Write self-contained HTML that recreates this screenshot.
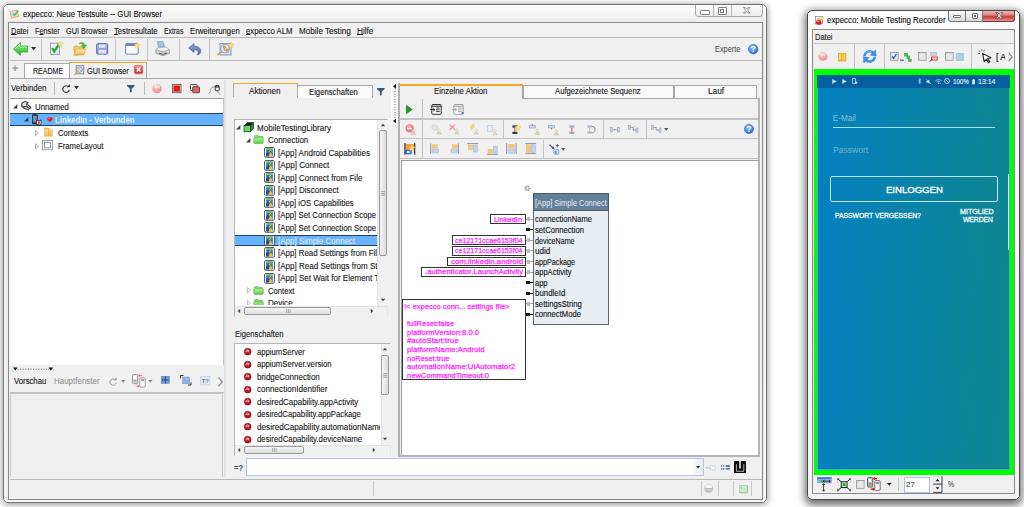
<!DOCTYPE html>
<html><head><meta charset="utf-8"><title>expecco</title>
<style>
html,body{margin:0;padding:0;background:#fff;}
body{width:1024px;height:507px;position:relative;overflow:hidden;font-family:"Liberation Sans",sans-serif;}
.b{position:absolute;box-sizing:content-box;}
.t{position:absolute;white-space:nowrap;transform-origin:0 50%;font-family:"Liberation Sans",sans-serif;}
.t u{text-decoration:underline;text-underline-offset:.3px;text-decoration-thickness:.8px;}
svg{position:absolute;overflow:visible;}
</style></head><body>
<div class="b" style="left:3.20px;top:3.60px;width:761.80px;height:497.40px;border-radius:5px;background:linear-gradient(180deg,#fdfdfd 0,#f4f4f4 10px,#e9e9e9 19px,#efefef 100%);border:1.3px solid #707070;box-shadow:0 1px 6px 1px rgba(0,0,0,.38);"></div>
<div class="b" style="left:4.20px;top:4.60px;width:759.80px;height:495.40px;border-radius:4px;border:1px solid rgba(255,255,255,.9);"></div>
<div class="b" style="left:7.90px;top:22.30px;width:753.00px;height:475.80px;background:#f0f0f0;border:1px solid #8a8a8a;"></div>
<div class="t" style="left:22.60px;top:9.07px;font-size:8.5px;line-height:11.05px;color:#111;transform:scaleX(0.9176);-webkit-text-stroke:.12px #111;">expecco: Neue Testsuite -- GUI Browser</div>
<div class="b" style="left:694.50px;top:4.80px;width:66.80px;height:11.40px;border:1px solid #a9a9a9;border-top:none;border-radius:0 0 3.5px 3.5px;background:linear-gradient(180deg,#fcfcfc,#ececec);box-sizing:content-box;"></div>
<div class="b" style="left:713.20px;top:4.80px;width:1.00px;height:11.40px;background:#b9b9b9;"></div>
<div class="b" style="left:731.00px;top:4.80px;width:1.00px;height:11.40px;background:#b9b9b9;"></div>
<div class="b" style="left:700.00px;top:10.20px;width:7.60px;height:2.60px;border:1px solid #7c7c7c;border-radius:1.2px;background:#fff;"></div>
<div class="b" style="left:718.20px;top:7.40px;width:6.40px;height:5.20px;border:1px solid #7c7c7c;border-radius:1px;background:#fff;"></div>
<div class="b" style="left:720.30px;top:9.40px;width:2.20px;height:1.30px;border:1px solid #7c7c7c;"></div>
<svg style="left:743.2px;top:7.2px" width="7.4" height="6.6" viewBox="0 0 7.4 6.6"><path d="M.5 .5 H2.2 L3.7 2.2 L5.2 .5 H6.9 L4.6 3.3 L6.9 6.1 H5.2 L3.7 4.4 L2.2 6.1 H.5 L2.8 3.3Z" fill="#fff" stroke="#777" stroke-width=".8"/></svg>
<div class="b" style="left:9.50px;top:23.50px;width:752.00px;height:13.50px;background:#f1f1f1;border-bottom:1px solid #b9b9b9;"></div>
<div class="t" style="left:10.80px;top:26.47px;font-size:8.5px;line-height:11.05px;color:#1a1a1a;transform:scaleX(0.8769);-webkit-text-stroke:.12px #1a1a1a;"><u>D</u>atei</div>
<div class="t" style="left:34.50px;top:26.47px;font-size:8.5px;line-height:11.05px;color:#1a1a1a;transform:scaleX(0.8572);-webkit-text-stroke:.12px #1a1a1a;">F<u>e</u>nster</div>
<div class="t" style="left:65.70px;top:26.47px;font-size:8.5px;line-height:11.05px;color:#1a1a1a;transform:scaleX(0.8593);-webkit-text-stroke:.12px #1a1a1a;">GUI Browser</div>
<div class="t" style="left:113.80px;top:26.47px;font-size:8.5px;line-height:11.05px;color:#1a1a1a;transform:scaleX(0.9048);-webkit-text-stroke:.12px #1a1a1a;"><u>T</u>estresultate</div>
<div class="t" style="left:163.70px;top:26.47px;font-size:8.5px;line-height:11.05px;color:#1a1a1a;transform:scaleX(0.8012);-webkit-text-stroke:.12px #1a1a1a;">Extras</div>
<div class="t" style="left:189.70px;top:26.47px;font-size:8.5px;line-height:11.05px;color:#1a1a1a;transform:scaleX(0.9068);-webkit-text-stroke:.12px #1a1a1a;">Erweiterungen</div>
<div class="t" style="left:245.80px;top:26.47px;font-size:8.5px;line-height:11.05px;color:#1a1a1a;transform:scaleX(0.9113);-webkit-text-stroke:.12px #1a1a1a;"><u>e</u>xpecco ALM</div>
<div class="t" style="left:298.60px;top:26.47px;font-size:8.5px;line-height:11.05px;color:#1a1a1a;transform:scaleX(0.9543);-webkit-text-stroke:.12px #1a1a1a;">Mobile Testing</div>
<div class="t" style="left:356.80px;top:26.47px;font-size:8.5px;line-height:11.05px;color:#1a1a1a;transform:scaleX(0.9645);-webkit-text-stroke:.12px #1a1a1a;"><u>H</u>ilfe</div>
<div class="b" style="left:9.50px;top:38.00px;width:752.00px;height:22.00px;background:#f0f0f0;border-bottom:1px solid #bdbdbd;"></div>
<div class="b" style="left:40.90px;top:38.50px;width:1.00px;height:21.00px;background:#c4c4c4;"></div>
<div class="b" style="left:115.30px;top:38.50px;width:1.00px;height:21.00px;background:#c4c4c4;"></div>
<div class="b" style="left:146.50px;top:38.50px;width:1.00px;height:21.00px;background:#c4c4c4;"></div>
<div class="b" style="left:179.00px;top:38.50px;width:1.00px;height:21.00px;background:#c4c4c4;"></div>
<div class="b" style="left:209.00px;top:38.50px;width:1.00px;height:21.00px;background:#c4c4c4;"></div>
<div class="t" style="left:714.50px;top:44.48px;font-size:8.5px;line-height:11.05px;color:#444;transform:scaleX(0.8637);">Experte</div>
<div class="b" style="left:9.50px;top:60.50px;width:752.00px;height:17.00px;background:#f0f0f0;border-bottom:1px solid #a8a8a8;"></div>
<div class="b" style="left:24.40px;top:63.30px;width:44.40px;height:14.20px;background:#fbfbfb;border:1px solid #a8a8a8;border-bottom:none;"></div>
<div class="t" style="left:32.50px;top:65.97px;font-size:8.5px;line-height:11.05px;color:#1a1a1a;transform:scaleX(0.8304);-webkit-text-stroke:.12px #1a1a1a;">README</div>
<div class="b" style="left:69.40px;top:61.60px;width:75.40px;height:15.80px;background:#f0f0f0;border:1px solid #a8a8a8;border-bottom:none;border-top:1.8px solid #f5a623;"></div>
<div class="t" style="left:87.40px;top:65.77px;font-size:8.5px;line-height:11.05px;color:#1a1a1a;transform:scaleX(0.8593);-webkit-text-stroke:.12px #1a1a1a;">GUI Browser</div>
<div class="t" style="left:11.20px;top:83.47px;font-size:8.5px;line-height:11.05px;color:#1a1a1a;transform:scaleX(0.9274);-webkit-text-stroke:.12px #1a1a1a;">Verbinden</div>
<div class="b" style="left:54.20px;top:82.00px;width:1.00px;height:13.00px;background:#bbb;"></div>
<div class="b" style="left:144.20px;top:82.00px;width:1.00px;height:13.00px;background:#bbb;"></div>
<div class="b" style="left:9.50px;top:97.60px;width:213.20px;height:266.90px;background:#fff;border-top:1px solid #9a9a9a;border-right:1px solid #c8c8c8;"></div>
<div class="b" style="left:10.00px;top:113.00px;width:213.20px;height:12.60px;background:#66b2ff;border-top:1px solid #245;border-bottom:1px solid #245;box-sizing:border-box;"></div>
<div class="t" style="left:35.10px;top:101.88px;font-size:8.5px;line-height:11.05px;color:#1a1a1a;transform:scaleX(0.9199);-webkit-text-stroke:.12px #1a1a1a;">Unnamed</div>
<div class="t" style="left:54.60px;top:114.67px;font-size:8.5px;line-height:11.05px;color:#eaf4ff;transform:scaleX(0.9200);font-weight:bold;">LinkedIn - Verbunden</div>
<div class="t" style="left:57.60px;top:127.98px;font-size:8.5px;line-height:11.05px;color:#1a1a1a;transform:scaleX(0.9004);-webkit-text-stroke:.12px #1a1a1a;">Contexts</div>
<div class="t" style="left:57.60px;top:140.97px;font-size:8.5px;line-height:11.05px;color:#1a1a1a;transform:scaleX(0.9067);-webkit-text-stroke:.12px #1a1a1a;">FrameLayout</div>
<div class="b" style="left:9.50px;top:371.50px;width:215.00px;height:20.00px;background:#f0f0f0;border-bottom:1px solid #c0c0c0;"></div>
<div class="t" style="left:13.70px;top:376.48px;font-size:8.5px;line-height:11.05px;color:#1a1a1a;transform:scaleX(0.9114);-webkit-text-stroke:.12px #1a1a1a;">Vorschau</div>
<div class="t" style="left:54.00px;top:376.48px;font-size:8.5px;line-height:11.05px;color:#888;transform:scaleX(0.9370);">Hauptfenster</div>
<div class="b" style="left:10.00px;top:392.50px;width:213.00px;height:84.00px;background:#efefef;border:1px solid #c6c6c6;border-bottom:none;box-sizing:border-box;"></div>
<div class="b" style="left:224.00px;top:79.50px;width:1.50px;height:397.00px;background:#e2e2e2;"></div>
<div class="b" style="left:225.50px;top:79.50px;width:165.00px;height:398.00px;background:#f0f0f0;"></div>
<div class="b" style="left:296.60px;top:85.40px;width:74.60px;height:11.60px;background:#fafafa;border:1px solid #a8a8a8;border-bottom:none;"></div>
<div class="b" style="left:232.80px;top:83.20px;width:63.40px;height:13.00px;background:#f0f0f0;border:1px solid #a8a8a8;border-bottom:none;border-top:1.8px solid #f5a623;"></div>
<div class="t" style="left:248.90px;top:86.17px;font-size:8.5px;line-height:11.05px;color:#1a1a1a;transform:scaleX(0.9553);-webkit-text-stroke:.12px #1a1a1a;">Aktionen</div>
<div class="t" style="left:309.00px;top:87.08px;font-size:8.5px;line-height:11.05px;color:#1a1a1a;transform:scaleX(0.9059);-webkit-text-stroke:.12px #1a1a1a;">Eigenschaften</div>
<div class="b" style="left:233.50px;top:119.00px;width:154.50px;height:197.50px;background:#fff;border:1px solid #b5b5b5;border-right-color:#e6e6e6;border-bottom-color:#e6e6e6;box-sizing:border-box;overflow:hidden;"></div>
<div class="b" style="left:234.50px;top:234.50px;width:142.50px;height:11.50px;background:#66b2ff;border-top:1px solid #245;border-bottom:1px solid #245;box-sizing:border-box;"></div>
<div class="b" style="left:234.5px;top:120px;width:142.5px;height:185px;overflow:hidden;"><div class="t" style="left:22.30px;top:2.58px;font-size:8.5px;line-height:11.05px;color:#1a1a1a;transform:scaleX(0.9494);-webkit-text-stroke:.12px #1a1a1a;">MobileTestingLibrary</div><div class="t" style="left:33.20px;top:15.13px;font-size:8.5px;line-height:11.05px;color:#1a1a1a;transform:scaleX(0.9372);-webkit-text-stroke:.12px #1a1a1a;">Connection</div><div class="t" style="left:43.40px;top:27.68px;font-size:8.5px;line-height:11.05px;color:#1a1a1a;transform:scaleX(0.9462);-webkit-text-stroke:.12px #1a1a1a;">[App] Android Capabilities</div><div class="t" style="left:43.40px;top:40.23px;font-size:8.5px;line-height:11.05px;color:#1a1a1a;transform:scaleX(0.9524);-webkit-text-stroke:.12px #1a1a1a;">[App] Connect</div><div class="t" style="left:43.40px;top:52.78px;font-size:8.5px;line-height:11.05px;color:#1a1a1a;transform:scaleX(0.9453);-webkit-text-stroke:.12px #1a1a1a;">[App] Connect from File</div><div class="t" style="left:43.40px;top:65.33px;font-size:8.5px;line-height:11.05px;color:#1a1a1a;transform:scaleX(0.9463);-webkit-text-stroke:.12px #1a1a1a;">[App] Disconnect</div><div class="t" style="left:43.40px;top:77.88px;font-size:8.5px;line-height:11.05px;color:#1a1a1a;transform:scaleX(0.9144);-webkit-text-stroke:.12px #1a1a1a;">[App] iOS Capabilities</div><div class="t" style="left:43.40px;top:90.42px;font-size:8.5px;line-height:11.05px;color:#1a1a1a;transform:scaleX(0.9196);-webkit-text-stroke:.12px #1a1a1a;">[App] Set Connection Scope</div><div class="t" style="left:43.40px;top:102.98px;font-size:8.5px;line-height:11.05px;color:#1a1a1a;transform:scaleX(0.9196);-webkit-text-stroke:.12px #1a1a1a;">[App] Set Connection Scope</div><div class="t" style="left:43.40px;top:115.53px;font-size:8.5px;line-height:11.05px;color:#e6f2ff;transform:scaleX(0.9403);">[App] Simple Connect</div><div class="t" style="left:43.40px;top:128.07px;font-size:8.5px;line-height:11.05px;color:#1a1a1a;transform:scaleX(0.9323);-webkit-text-stroke:.12px #1a1a1a;">[App] Read Settings from File</div><div class="t" style="left:43.40px;top:140.63px;font-size:8.5px;line-height:11.05px;color:#1a1a1a;transform:scaleX(0.9454);-webkit-text-stroke:.12px #1a1a1a;">[App] Read Settings from String</div><div class="t" style="left:43.40px;top:153.17px;font-size:8.5px;line-height:11.05px;color:#1a1a1a;transform:scaleX(0.9447);-webkit-text-stroke:.12px #1a1a1a;">[App] Set Wait for Element Timeout</div><div class="t" style="left:33.20px;top:165.72px;font-size:8.5px;line-height:11.05px;color:#1a1a1a;transform:scaleX(0.9013);-webkit-text-stroke:.12px #1a1a1a;">Context</div><div class="t" style="left:33.20px;top:178.28px;font-size:8.5px;line-height:11.05px;color:#1a1a1a;transform:scaleX(0.9469);-webkit-text-stroke:.12px #1a1a1a;">Device</div><svg style="left:18.900000000000006px;top:178.50px" width="10.8" height="8.8" viewBox="0 0 10.8 8.8"><path d="M1.4 1.4 Q1.4 .5 2.4 .5 H5 L6 1.5 H9 Q10 1.5 10 2.4 V7.4 Q10 8.3 9 8.3 H2.4 Q1.4 8.3 1.4 7.4Z" fill="#7fd86a" stroke="#4cb642" stroke-width=".6"/><path d="M.7 3.6 Q.7 2.8 1.6 2.8 H9.4 Q10.2 2.8 10.2 3.6 V7.4 Q10.2 8.3 9.3 8.3 H1.6 Q.7 8.3 .7 7.4Z" fill="#8fe07a" stroke="#55c048" stroke-width=".5"/></svg><svg style="left:12.099999999999994px;top:179.90px" width="4" height="6.4" viewBox="0 0 4 6.4"><path d="M.5 .6 L3.5 3.2 L.5 5.8Z" fill="#fff" stroke="#aaa" stroke-width=".8"/></svg></div>
<div class="b" style="left:377.00px;top:120.00px;width:10.50px;height:185.50px;background:#f0f0f0;border-left:1px solid #e3e3e3;"></div>
<div class="b" style="left:378.90px;top:130.30px;width:8.60px;height:125.50px;background:linear-gradient(90deg,#f5f5f5,#dcdcdc);border:1px solid #9a9a9a;border-radius:2px;box-sizing:border-box;"></div>
<div class="b" style="left:234.50px;top:305.50px;width:152.50px;height:10.00px;background:#f0f0f0;border-top:1px solid #e3e3e3;"></div>
<div class="b" style="left:244.40px;top:306.50px;width:86.80px;height:8.50px;background:linear-gradient(180deg,#f5f5f5,#dcdcdc);border:1px solid #9a9a9a;border-radius:2px;box-sizing:border-box;"></div>
<div class="t" style="left:234.50px;top:328.98px;font-size:8.5px;line-height:11.05px;color:#1a1a1a;transform:scaleX(0.9003);-webkit-text-stroke:.12px #1a1a1a;">Eigenschaften</div>
<div class="b" style="left:233.50px;top:343.00px;width:157.00px;height:113.00px;background:#fff;border:1px solid #b5b5b5;border-right-color:#e6e6e6;border-bottom-color:#e6e6e6;box-sizing:border-box;"></div>
<div class="b" style="left:234.5px;top:344px;width:145.5px;height:100px;overflow:hidden;"><div class="t" style="left:22.70px;top:2.87px;font-size:8.5px;line-height:11.05px;color:#1a1a1a;transform:scaleX(0.9034);-webkit-text-stroke:.12px #1a1a1a;">appiumServer</div><svg style="left:9.80px;top:4.00px" width="7.4" height="7.4" viewBox="0 0 7.4 7.4"><circle cx="3.7" cy="3.7" r="3.4" fill="#c2131f" stroke="#7c0a14" stroke-width=".6"/><path d="M2 3.9 C1.8 2.2 3.4 1.5 4.4 2.2 C5.4 2.9 4.6 4.2 3.9 3.9 C3.3 3.6 3.8 2.7 4.3 3" fill="none" stroke="#fff" stroke-width=".75" stroke-linecap="round"/></svg><div class="t" style="left:22.70px;top:15.37px;font-size:8.5px;line-height:11.05px;color:#1a1a1a;transform:scaleX(0.9075);-webkit-text-stroke:.12px #1a1a1a;">appiumServer.version</div><svg style="left:9.80px;top:16.50px" width="7.4" height="7.4" viewBox="0 0 7.4 7.4"><circle cx="3.7" cy="3.7" r="3.4" fill="#c2131f" stroke="#7c0a14" stroke-width=".6"/><path d="M2 3.9 C1.8 2.2 3.4 1.5 4.4 2.2 C5.4 2.9 4.6 4.2 3.9 3.9 C3.3 3.6 3.8 2.7 4.3 3" fill="none" stroke="#fff" stroke-width=".75" stroke-linecap="round"/></svg><div class="t" style="left:22.70px;top:27.87px;font-size:8.5px;line-height:11.05px;color:#1a1a1a;transform:scaleX(0.9426);-webkit-text-stroke:.12px #1a1a1a;">bridgeConnection</div><svg style="left:9.80px;top:29.00px" width="7.4" height="7.4" viewBox="0 0 7.4 7.4"><circle cx="3.7" cy="3.7" r="3.4" fill="#c2131f" stroke="#7c0a14" stroke-width=".6"/><path d="M2 3.9 C1.8 2.2 3.4 1.5 4.4 2.2 C5.4 2.9 4.6 4.2 3.9 3.9 C3.3 3.6 3.8 2.7 4.3 3" fill="none" stroke="#fff" stroke-width=".75" stroke-linecap="round"/></svg><div class="t" style="left:22.70px;top:40.37px;font-size:8.5px;line-height:11.05px;color:#1a1a1a;transform:scaleX(0.9551);-webkit-text-stroke:.12px #1a1a1a;">connectionIdentifier</div><svg style="left:9.80px;top:41.50px" width="7.4" height="7.4" viewBox="0 0 7.4 7.4"><circle cx="3.7" cy="3.7" r="3.4" fill="#c2131f" stroke="#7c0a14" stroke-width=".6"/><path d="M2 3.9 C1.8 2.2 3.4 1.5 4.4 2.2 C5.4 2.9 4.6 4.2 3.9 3.9 C3.3 3.6 3.8 2.7 4.3 3" fill="none" stroke="#fff" stroke-width=".75" stroke-linecap="round"/></svg><div class="t" style="left:22.70px;top:52.87px;font-size:8.5px;line-height:11.05px;color:#1a1a1a;transform:scaleX(0.9368);-webkit-text-stroke:.12px #1a1a1a;">desiredCapability.appActivity</div><svg style="left:9.80px;top:54.00px" width="7.4" height="7.4" viewBox="0 0 7.4 7.4"><circle cx="3.7" cy="3.7" r="3.4" fill="#c2131f" stroke="#7c0a14" stroke-width=".6"/><path d="M2 3.9 C1.8 2.2 3.4 1.5 4.4 2.2 C5.4 2.9 4.6 4.2 3.9 3.9 C3.3 3.6 3.8 2.7 4.3 3" fill="none" stroke="#fff" stroke-width=".75" stroke-linecap="round"/></svg><div class="t" style="left:22.70px;top:65.37px;font-size:8.5px;line-height:11.05px;color:#1a1a1a;transform:scaleX(0.9099);-webkit-text-stroke:.12px #1a1a1a;">desiredCapability.appPackage</div><svg style="left:9.80px;top:66.50px" width="7.4" height="7.4" viewBox="0 0 7.4 7.4"><circle cx="3.7" cy="3.7" r="3.4" fill="#c2131f" stroke="#7c0a14" stroke-width=".6"/><path d="M2 3.9 C1.8 2.2 3.4 1.5 4.4 2.2 C5.4 2.9 4.6 4.2 3.9 3.9 C3.3 3.6 3.8 2.7 4.3 3" fill="none" stroke="#fff" stroke-width=".75" stroke-linecap="round"/></svg><div class="t" style="left:22.70px;top:77.87px;font-size:8.5px;line-height:11.05px;color:#1a1a1a;transform:scaleX(0.9593);-webkit-text-stroke:.12px #1a1a1a;">desiredCapability.automationName</div><svg style="left:9.80px;top:79.00px" width="7.4" height="7.4" viewBox="0 0 7.4 7.4"><circle cx="3.7" cy="3.7" r="3.4" fill="#c2131f" stroke="#7c0a14" stroke-width=".6"/><path d="M2 3.9 C1.8 2.2 3.4 1.5 4.4 2.2 C5.4 2.9 4.6 4.2 3.9 3.9 C3.3 3.6 3.8 2.7 4.3 3" fill="none" stroke="#fff" stroke-width=".75" stroke-linecap="round"/></svg><div class="t" style="left:22.70px;top:90.37px;font-size:8.5px;line-height:11.05px;color:#1a1a1a;transform:scaleX(0.9205);-webkit-text-stroke:.12px #1a1a1a;">desiredCapability.deviceName</div><svg style="left:9.80px;top:91.50px" width="7.4" height="7.4" viewBox="0 0 7.4 7.4"><circle cx="3.7" cy="3.7" r="3.4" fill="#c2131f" stroke="#7c0a14" stroke-width=".6"/><path d="M2 3.9 C1.8 2.2 3.4 1.5 4.4 2.2 C5.4 2.9 4.6 4.2 3.9 3.9 C3.3 3.6 3.8 2.7 4.3 3" fill="none" stroke="#fff" stroke-width=".75" stroke-linecap="round"/></svg></div>
<div class="b" style="left:380.50px;top:344.00px;width:9.00px;height:100.50px;background:#f0f0f0;border-left:1px solid #e3e3e3;"></div>
<div class="b" style="left:380.90px;top:354.50px;width:8.60px;height:40.50px;background:linear-gradient(90deg,#f5f5f5,#dcdcdc);border:1px solid #9a9a9a;border-radius:2px;box-sizing:border-box;"></div>
<div class="b" style="left:234.50px;top:444.50px;width:155.00px;height:10.50px;background:#f0f0f0;border-top:1px solid #e3e3e3;"></div>
<div class="b" style="left:244.40px;top:445.50px;width:59.60px;height:8.50px;background:linear-gradient(180deg,#f5f5f5,#dcdcdc);border:1px solid #9a9a9a;border-radius:2px;box-sizing:border-box;"></div>
<div class="t" style="left:234.00px;top:463.18px;font-size:8.5px;line-height:11.05px;color:#3a4a66;transform:scaleX(0.8862);font-weight:bold;">=?</div>
<div class="b" style="left:246.40px;top:458.30px;width:457.20px;height:18.20px;background:#fff;border:1px solid #b4c4ea;box-sizing:border-box;"></div>
<div class="b" style="left:693.20px;top:459.30px;width:9.40px;height:16.20px;background:linear-gradient(90deg,#fafafa,#ececec);"></div>
<div class="b" style="left:9.50px;top:478.50px;width:752.00px;height:19.00px;background:#f0f0f0;border-top:1px solid #b8b8b8;"></div>
<div class="b" style="left:373.10px;top:481.00px;width:1.00px;height:15.00px;background:#c8c8c8;"></div>
<div class="b" style="left:700.50px;top:481.00px;width:1.00px;height:15.00px;background:#c8c8c8;"></div>
<div class="b" style="left:717.50px;top:481.00px;width:1.00px;height:15.00px;background:#c8c8c8;"></div>
<div class="b" style="left:733.00px;top:481.00px;width:1.00px;height:15.00px;background:#c8c8c8;"></div>
<div class="b" style="left:750.50px;top:481.00px;width:1.00px;height:15.00px;background:#c8c8c8;"></div>
<div class="b" style="left:397.80px;top:97.50px;width:362.20px;height:359.00px;background:#f0f0f0;border:1px solid #a8a8a8;border-left:2px solid #b0b0b0;border-right:2px solid #b4b4b4;border-bottom:2px solid #b4b4b4;box-sizing:border-box;"></div>
<div class="b" style="left:523.00px;top:85.00px;width:150.70px;height:13.00px;background:#fafafa;border:1px solid #a8a8a8;border-bottom:none;box-sizing:border-box;"></div>
<div class="b" style="left:673.70px;top:85.00px;width:83.00px;height:13.00px;background:#fafafa;border:1px solid #a8a8a8;border-bottom:none;box-sizing:border-box;"></div>
<div class="b" style="left:398.50px;top:83.50px;width:124.50px;height:15.00px;background:#f0f0f0;border:1px solid #a8a8a8;border-bottom:none;border-top:2px solid #f5a623;box-sizing:border-box;"></div>
<div class="t" style="left:434.40px;top:85.58px;font-size:8.5px;line-height:11.05px;color:#1a1a1a;transform:scaleX(0.9188);-webkit-text-stroke:.12px #1a1a1a;">Einzelne Aktion</div>
<div class="t" style="left:555.00px;top:86.17px;font-size:8.5px;line-height:11.05px;color:#1a1a1a;transform:scaleX(0.9047);-webkit-text-stroke:.12px #1a1a1a;">Aufgezeichnete Sequenz</div>
<div class="t" style="left:707.50px;top:86.17px;font-size:8.5px;line-height:11.05px;color:#1a1a1a;transform:scaleX(0.9733);-webkit-text-stroke:.12px #1a1a1a;">Lauf</div>
<div class="b" style="left:399.50px;top:118.30px;width:358.00px;height:1.40px;background:#c2c2c2;"></div>
<div class="b" style="left:399.50px;top:137.90px;width:358.00px;height:1.40px;background:#c2c2c2;"></div>
<div class="b" style="left:399.50px;top:158.10px;width:358.00px;height:1.40px;background:#c2c2c2;"></div>
<div class="b" style="left:422.00px;top:99.00px;width:1.00px;height:59.00px;background:#c4c4c4;"></div>
<div class="b" style="left:503.40px;top:120.00px;width:1.00px;height:18.00px;background:#c4c4c4;"></div>
<div class="b" style="left:602.80px;top:120.00px;width:1.00px;height:18.00px;background:#c4c4c4;"></div>
<div class="b" style="left:646.00px;top:120.00px;width:1.00px;height:18.00px;background:#c4c4c4;"></div>
<div class="b" style="left:543.20px;top:140.00px;width:1.00px;height:18.00px;background:#c4c4c4;"></div>
<div class="b" style="left:397.60px;top:83.40px;width:2.00px;height:373.00px;background:#b0b0b0;"></div>
<div class="b" style="left:400.50px;top:159.50px;width:357.50px;height:295.00px;background:#fff;border-top:1px solid #9a9a9a;border-left:1px solid #9a9a9a;box-sizing:border-box;"></div>
<div class="b" style="left:533.00px;top:193.30px;width:76.00px;height:132.00px;background:#e9eef2;border:1px solid #5a6670;box-sizing:border-box;"></div>
<div class="b" style="left:533.00px;top:193.30px;width:76.00px;height:18.20px;background:#64809a;border:1px solid #4a5a68;box-sizing:border-box;"></div>
<div class="t" style="left:535.20px;top:198.87px;font-size:8.2px;line-height:10.66px;color:#e8eef4;transform:scaleX(0.9054);">[App] Simple Connect</div>
<div class="t" style="left:535.00px;top:214.41px;font-size:8.6px;line-height:11.18px;color:#111;transform:scaleX(0.8833);-webkit-text-stroke:.12px #111;">connectionName</div>
<div class="b" style="left:526.00px;top:218.80px;width:7.00px;height:1.00px;background:#aaa;"></div>
<div class="b" style="left:526.50px;top:217.30px;width:3.00px;height:4.00px;background:#bbb;"></div>
<div class="t" style="left:535.00px;top:224.96px;font-size:8.6px;line-height:11.18px;color:#111;transform:scaleX(0.8913);-webkit-text-stroke:.12px #111;">setConnection</div>
<div class="b" style="left:526.00px;top:228.35px;width:3.50px;height:3.00px;background:#111;"></div>
<div class="b" style="left:529.00px;top:229.35px;width:4.00px;height:1.00px;background:#111;"></div>
<div class="t" style="left:535.00px;top:235.51px;font-size:8.6px;line-height:11.18px;color:#111;transform:scaleX(0.8285);-webkit-text-stroke:.12px #111;">deviceName</div>
<div class="b" style="left:526.00px;top:239.90px;width:7.00px;height:1.00px;background:#aaa;"></div>
<div class="b" style="left:526.50px;top:238.40px;width:3.00px;height:4.00px;background:#bbb;"></div>
<div class="t" style="left:535.00px;top:246.06px;font-size:8.6px;line-height:11.18px;color:#111;transform:scaleX(0.9411);-webkit-text-stroke:.12px #111;">udid</div>
<div class="b" style="left:526.00px;top:250.45px;width:7.00px;height:1.00px;background:#aaa;"></div>
<div class="b" style="left:526.50px;top:248.95px;width:3.00px;height:4.00px;background:#bbb;"></div>
<div class="t" style="left:535.00px;top:256.61px;font-size:8.6px;line-height:11.18px;color:#111;transform:scaleX(0.8387);-webkit-text-stroke:.12px #111;">appPackage</div>
<div class="b" style="left:526.00px;top:261.00px;width:7.00px;height:1.00px;background:#aaa;"></div>
<div class="b" style="left:526.50px;top:259.50px;width:3.00px;height:4.00px;background:#bbb;"></div>
<div class="t" style="left:535.00px;top:267.16px;font-size:8.6px;line-height:11.18px;color:#111;transform:scaleX(0.8802);-webkit-text-stroke:.12px #111;">appActivity</div>
<div class="b" style="left:526.00px;top:271.55px;width:7.00px;height:1.00px;background:#aaa;"></div>
<div class="b" style="left:526.50px;top:270.05px;width:3.00px;height:4.00px;background:#bbb;"></div>
<div class="t" style="left:535.00px;top:277.71px;font-size:8.6px;line-height:11.18px;color:#111;transform:scaleX(0.8712);-webkit-text-stroke:.12px #111;">app</div>
<div class="b" style="left:526.00px;top:281.10px;width:3.50px;height:3.00px;background:#111;"></div>
<div class="b" style="left:529.00px;top:282.10px;width:4.00px;height:1.00px;background:#111;"></div>
<div class="t" style="left:535.00px;top:288.26px;font-size:8.6px;line-height:11.18px;color:#111;transform:scaleX(0.9183);-webkit-text-stroke:.12px #111;">bundleId</div>
<div class="b" style="left:526.00px;top:291.65px;width:3.50px;height:3.00px;background:#111;"></div>
<div class="b" style="left:529.00px;top:292.65px;width:4.00px;height:1.00px;background:#111;"></div>
<div class="t" style="left:535.00px;top:298.81px;font-size:8.6px;line-height:11.18px;color:#111;transform:scaleX(0.9002);-webkit-text-stroke:.12px #111;">settingsString</div>
<div class="b" style="left:526.00px;top:303.20px;width:7.00px;height:1.00px;background:#aaa;"></div>
<div class="b" style="left:526.50px;top:301.70px;width:3.00px;height:4.00px;background:#bbb;"></div>
<div class="t" style="left:535.00px;top:309.36px;font-size:8.6px;line-height:11.18px;color:#111;transform:scaleX(0.8910);-webkit-text-stroke:.12px #111;">connectMode</div>
<div class="b" style="left:526.00px;top:312.75px;width:3.50px;height:3.00px;background:#111;"></div>
<div class="b" style="left:529.00px;top:313.75px;width:4.00px;height:1.00px;background:#111;"></div>
<div class="b" style="left:490.30px;top:214.30px;width:35.50px;height:9.80px;background:#fff;border:1px solid #333;box-sizing:border-box;"></div>
<div class="t" style="left:494.00px;top:214.60px;font-size:8px;line-height:10.4px;color:#ff22ff;transform:scaleX(0.9258);-webkit-text-stroke:.25px #ff22ff;">LinkedIn</div>
<div class="b" style="left:451.70px;top:235.40px;width:74.10px;height:9.80px;background:#fff;border:1px solid #333;box-sizing:border-box;"></div>
<div class="t" style="left:455.00px;top:235.70px;font-size:8px;line-height:10.4px;color:#ff22ff;transform:scaleX(0.8823);-webkit-text-stroke:.25px #ff22ff;">ce12171ccae6153f04</div>
<div class="b" style="left:451.70px;top:245.95px;width:74.10px;height:9.80px;background:#fff;border:1px solid #333;box-sizing:border-box;"></div>
<div class="t" style="left:455.00px;top:246.25px;font-size:8px;line-height:10.4px;color:#ff22ff;transform:scaleX(0.8823);-webkit-text-stroke:.25px #ff22ff;">ce12171ccae6153f04</div>
<div class="b" style="left:447.30px;top:256.50px;width:78.50px;height:9.80px;background:#fff;border:1px solid #333;box-sizing:border-box;"></div>
<div class="t" style="left:450.50px;top:256.80px;font-size:8px;line-height:10.4px;color:#ff22ff;transform:scaleX(0.9813);-webkit-text-stroke:.25px #ff22ff;">com.linkedin.android</div>
<div class="b" style="left:421.10px;top:267.05px;width:104.70px;height:9.80px;background:#fff;border:1px solid #333;box-sizing:border-box;"></div>
<div class="t" style="left:424.50px;top:267.35px;font-size:8px;line-height:10.4px;color:#ff22ff;transform:scaleX(0.9624);-webkit-text-stroke:.25px #ff22ff;">.authenticator.LaunchActivity</div>
<div class="b" style="left:402.40px;top:298.50px;width:123.40px;height:81.50px;background:#fff;border:1px solid #333;box-sizing:border-box;"></div>
<div class="t" style="left:404.00px;top:302.30px;font-size:8px;line-height:10.4px;color:#ff22ff;transform:scaleX(0.9414);-webkit-text-stroke:.25px #ff22ff;">!&lt; expecco conn... settings file&gt;</div>
<div class="t" style="left:406.50px;top:319.30px;font-size:8px;line-height:10.4px;color:#ff22ff;transform:scaleX(0.9354);-webkit-text-stroke:.25px #ff22ff;">fullReset:false</div>
<div class="t" style="left:406.50px;top:327.85px;font-size:8px;line-height:10.4px;color:#ff22ff;transform:scaleX(0.9525);-webkit-text-stroke:.25px #ff22ff;">platformVersion:8.0.0</div>
<div class="t" style="left:406.50px;top:336.40px;font-size:8px;line-height:10.4px;color:#ff22ff;transform:scaleX(0.9732);-webkit-text-stroke:.25px #ff22ff;">#autoStart:true</div>
<div class="t" style="left:406.50px;top:344.95px;font-size:8px;line-height:10.4px;color:#ff22ff;transform:scaleX(0.9684);-webkit-text-stroke:.25px #ff22ff;">platformName:Android</div>
<div class="t" style="left:406.50px;top:353.50px;font-size:8px;line-height:10.4px;color:#ff22ff;transform:scaleX(0.9279);-webkit-text-stroke:.25px #ff22ff;">noReset:true</div>
<div class="t" style="left:406.50px;top:362.05px;font-size:8px;line-height:10.4px;color:#ff22ff;transform:scaleX(0.9639);-webkit-text-stroke:.25px #ff22ff;">automationName:UiAutomator2</div>
<div class="t" style="left:406.50px;top:370.60px;font-size:8px;line-height:10.4px;color:#ff22ff;transform:scaleX(0.9442);-webkit-text-stroke:.25px #ff22ff;">newCommandTimeout:0</div>
<div class="b" style="left:807.40px;top:9.80px;width:212.40px;height:489.80px;border-radius:5px;background:linear-gradient(180deg,#fdfdfd 0,#f2f2f2 100%);border:1px solid #4a4a4a;box-shadow:0 3px 9px 2px rgba(0,0,0,.6);box-sizing:border-box;"></div>
<div class="b" style="left:812.20px;top:29.30px;width:202.60px;height:465.20px;background:#f0f0f0;border:1px solid #8a8a8a;box-sizing:border-box;"></div>
<div class="t" style="left:826.50px;top:15.17px;font-size:8.5px;line-height:11.05px;color:#111;transform:scaleX(0.9267);-webkit-text-stroke:.12px #111;">expecco: Mobile Testing Recorder</div>
<div class="b" style="left:948.40px;top:10.50px;width:17.50px;height:11.50px;border:1px solid #777;border-top:none;border-radius:0 0 0 3px;background:linear-gradient(180deg,#fdfdfd,#d8d8d8);box-sizing:border-box;"></div>
<div class="b" style="left:965.90px;top:10.50px;width:17.50px;height:11.50px;border:1px solid #777;border-top:none;border-left:none;background:linear-gradient(180deg,#fdfdfd,#d8d8d8);box-sizing:border-box;"></div>
<div class="b" style="left:983.40px;top:10.50px;width:32.00px;height:11.50px;border:1px solid #7a3a36;border-top:none;border-left:none;border-radius:0 0 3px 0;background:linear-gradient(180deg,#ecb8b2 0,#de8480 42%,#cb3a3e 50%,#d45a5a 75%,#e49a94 100%);box-sizing:border-box;"></div>
<div class="b" style="left:953.00px;top:15.20px;width:7.50px;height:3.00px;border:1px solid #707070;border-radius:1px;background:#fff;box-sizing:border-box;"></div>
<div class="b" style="left:971.50px;top:12.60px;width:6.50px;height:6.00px;border:1px solid #707070;border-radius:1px;background:#fff;box-sizing:border-box;"></div>
<div class="b" style="left:973.50px;top:14.60px;width:2.50px;height:2.00px;border:1px solid #707070;box-sizing:border-box;"></div>
<svg style="left:994.6px;top:12.2px" width="8.4" height="7.2" viewBox="0 0 7.4 6.6"><path d="M.5 .5 H2.2 L3.7 2.2 L5.2 .5 H6.9 L4.6 3.3 L6.9 6.1 H5.2 L3.7 4.4 L2.2 6.1 H.5 L2.8 3.3Z" fill="#fff" stroke="#5a3a3a" stroke-width=".6"/></svg>
<div class="t" style="left:815.00px;top:32.18px;font-size:8.5px;line-height:11.05px;color:#1a1a1a;transform:scaleX(0.8820);-webkit-text-stroke:.12px #1a1a1a;">Datei</div>
<div class="b" style="left:814.00px;top:43.00px;width:199.50px;height:1.00px;background:#c4c4c4;"></div>
<div class="b" style="left:854.10px;top:44.00px;width:1.00px;height:24.50px;background:#c4c4c4;"></div>
<div class="b" style="left:884.10px;top:44.00px;width:1.00px;height:24.50px;background:#c4c4c4;"></div>
<div class="b" style="left:971.10px;top:44.00px;width:1.00px;height:24.50px;background:#c4c4c4;"></div>
<div class="t" style="left:995.90px;top:52.48px;font-size:8.5px;line-height:11.05px;color:#111;transform:scaleX(1.0178);-webkit-text-stroke:.12px #111;">[ A</div>
<div class="b" style="left:1005.40px;top:44.00px;width:8.60px;height:24.50px;background:linear-gradient(90deg,rgba(240,240,240,.7),#f4f4f4 40%);"></div>
<div class="b" style="left:813.50px;top:69.00px;width:200.50px;height:405.50px;background:#0f0;"></div>
<div class="b" style="left:817.20px;top:74.60px;width:192.60px;height:395.60px;background:linear-gradient(93deg,#0480c1 0%,#0a83a6 52%,#10868f 100%);box-shadow:inset 0 0 0 .8px rgba(200,235,245,.45);"></div>
<div class="b" style="left:817.20px;top:74.60px;width:192.60px;height:13.40px;background:#035f9e;"></div>
<div class="t" style="left:953.20px;top:77.22px;font-size:7.2px;line-height:9.36px;color:#d8e9f5;transform:scaleX(0.8580);-webkit-text-stroke:.2px #d8e9f5;">100%</div>
<div class="t" style="left:978.30px;top:77.22px;font-size:7.2px;line-height:9.36px;color:#d8e9f5;transform:scaleX(0.9714);-webkit-text-stroke:.2px #d8e9f5;">13:14</div>
<div class="t" style="left:832.70px;top:114.27px;font-size:8.2px;line-height:10.66px;color:#7fc0dc;">E-Mail</div>
<div class="b" style="left:832.50px;top:127.20px;width:162.30px;height:1.00px;background:#a9dcee;"></div>
<div class="t" style="left:832.70px;top:145.87px;font-size:8.2px;line-height:10.66px;color:#6fb6d2;transform:scaleX(1.0469);">Passwort</div>
<div class="b" style="left:830.30px;top:176.20px;width:167.40px;height:25.40px;border:1px solid #bfe4f2;border-radius:2px;box-sizing:border-box;"></div>
<div class="t" style="left:885.70px;top:184.35px;font-size:9.3px;line-height:12.09px;color:#fff;transform:scaleX(1.0272);-webkit-text-stroke:.35px #fff;">EINLOGGEN</div>
<div class="t" style="left:834.90px;top:211.91px;font-size:6.6px;line-height:8.58px;color:#eef8fc;transform:scaleX(1.0272);-webkit-text-stroke:.3px #eef8fc;">PASSWORT VERGESSEN?</div>
<div class="t" style="left:959.50px;top:207.71px;font-size:6.6px;line-height:8.58px;color:#eef8fc;transform:scaleX(1.0844);-webkit-text-stroke:.3px #eef8fc;">MITGLIED</div>
<div class="t" style="left:963.30px;top:216.31px;font-size:6.6px;line-height:8.58px;color:#eef8fc;transform:scaleX(1.0227);-webkit-text-stroke:.3px #eef8fc;">WERDEN</div>
<div class="b" style="left:1008.20px;top:174.00px;width:1.00px;height:76.00px;background:#cfe6ee;"></div>
<div class="b" style="left:814.00px;top:474.50px;width:199.50px;height:18.50px;background:#f0f0f0;"></div>
<div class="b" style="left:898.20px;top:478.00px;width:1.00px;height:13.00px;background:#c4c4c4;"></div>
<div class="b" style="left:904.30px;top:476.50px;width:25.40px;height:16.00px;background:#fff;border:1px solid #aebfe6;box-sizing:border-box;"></div>
<div class="t" style="left:906.30px;top:480.46px;font-size:7.6px;line-height:9.88px;color:#333;transform:scaleX(1.0411);font-family:"Liberation Mono",monospace;letter-spacing:.6px;">27</div>
<div class="t" style="left:947.50px;top:480.07px;font-size:8.2px;line-height:10.66px;color:#333;transform:scaleX(0.8366);">%</div>
<svg width="0" height="0" style="left:0;top:0"><defs>
<linearGradient id="gG" x1="0" y1="0" x2="0" y2="1"><stop offset="0" stop-color="#9df09a"/><stop offset="1" stop-color="#22b422"/></linearGradient>
<linearGradient id="gP" x1="0" y1="0" x2="1" y2="1"><stop offset="0" stop-color="#ffffff"/><stop offset="1" stop-color="#d5dcea"/></linearGradient>
<linearGradient id="gY" x1="0" y1="0" x2="0" y2="1"><stop offset="0" stop-color="#ffe9a8"/><stop offset="1" stop-color="#f0b850"/></linearGradient>
<linearGradient id="gB" x1="0" y1="0" x2="0" y2="1"><stop offset="0" stop-color="#a9c1ea"/><stop offset="1" stop-color="#6f8fce"/></linearGradient>
<linearGradient id="gU" x1="0" y1="0" x2="0" y2="1"><stop offset="0" stop-color="#8fa6d6"/><stop offset="1" stop-color="#4f6aa6"/></linearGradient>
<linearGradient id="gS" x1="0" y1="0" x2="0" y2="1"><stop offset="0" stop-color="#ffffff"/><stop offset="1" stop-color="#b9b9b9"/></linearGradient>
<radialGradient id="gH" cx="0.4" cy="0.3" r="0.8"><stop offset="0" stop-color="#8fc0ff"/><stop offset="1" stop-color="#1f63d0"/></radialGradient>
<radialGradient id="gR" cx="0.4" cy="0.3" r="0.8"><stop offset="0" stop-color="#ffd0d0"/><stop offset="1" stop-color="#ea8080"/></radialGradient>
<linearGradient id="gF" x1="0" y1="0" x2="0" y2="1"><stop offset="0" stop-color="#b5ef9e"/><stop offset="1" stop-color="#5ccc4a"/></linearGradient>
<linearGradient id="gA" x1="0" y1="0" x2="1" y2="1"><stop offset="0" stop-color="#2f8de0"/><stop offset="1" stop-color="#0d3f7a"/></linearGradient>
</defs></svg>
<svg style="left:12.70px;top:41.90px" width="15.20" height="14.00" viewBox="0 0 15.2 14"><path d="M0.5 7 L7.3 0.6 V4 H14.6 V10 H7.3 V13.4 Z" fill="url(#gG)" stroke="#3fae3c" stroke-width=".9" stroke-linejoin="round"/><path d="M2 7 L6.6 2.6 V5 H13.6" fill="none" stroke="#d6ffd0" stroke-width=".8" opacity=".8"/></svg>
<svg style="left:30.90px;top:47.10px" width="5.20" height="3.40" viewBox="0 0 5.2 3.4"><path d="M0 0h5.2l-2.6 3.4z" fill="#333"/></svg>
<svg style="left:50.20px;top:41.30px" width="13.00" height="14.00" viewBox="0 0 13 14"><path d="M0.5 2.2 H9.5 V13.4 H0.5Z" fill="url(#gP)" stroke="#8593b5" stroke-width=".9"/><path d="M1.6 7.6 L4.2 12 L9.6 4.2 L8 3.2 L4.2 8.8 L3 6.8Z" fill="#22b822" stroke="#13851a" stroke-width=".5"/><g transform="translate(10.4,0.2) scale(0.8)"><path d="M0 0 l1.1 2.3 2.5 .3 -1.8 1.8 .5 2.5 -2.3 -1.2 -2.3 1.2 .5 -2.5 -1.8 -1.8 2.5 -.3z" fill="#ffe277" stroke="#e9b445" stroke-width=".45"/></g></svg>
<svg style="left:73.00px;top:41.30px" width="13.50" height="14.70" viewBox="0 0 13.5 14.7"><path d="M0.6 6.2 L2 5 H5 L6 6 H11 V13.6 L2 14.2 Z" fill="#f3c56a" stroke="#d89a3a" stroke-width=".7"/><path d="M0.6 14.2 L3 8 H13 L10.6 13.4 Z" fill="url(#gY)" stroke="#e0a848" stroke-width=".7"/><path d="M6 2.6 C8.6 0.6 11.4 1.4 11.8 4.2 L13.6 4 L10.8 7.6 L8.4 4.6 L10 4.4 C9.6 3 8 2.4 6 2.6Z" fill="#46c146" stroke="#2c9a2c" stroke-width=".5"/></svg>
<svg style="left:95.90px;top:43.30px" width="12.30" height="11.70" viewBox="0 0 12.3 11.7"><rect x=".6" y=".6" width="11.1" height="10.5" rx="1" fill="url(#gB)" stroke="#5f74b0" stroke-width="1"/><rect x="2.6" y="1.2" width="7" height="3.8" fill="#e8eef9" stroke="#7f94c6" stroke-width=".5"/><rect x="2.2" y="6.6" width="8" height="4.2" fill="#f5f7fc" stroke="#7f94c6" stroke-width=".5"/><path d="M3 8h6M3 9.4h6" stroke="#aab6d6" stroke-width=".5"/></svg>
<svg style="left:124.70px;top:42.00px" width="15.00" height="13.00" viewBox="0 0 15 13"><rect x=".6" y="1.6" width="12.6" height="10.6" rx=".8" fill="#fbfcff" stroke="#5f74b4" stroke-width=".9"/><rect x="1.1" y="2.1" width="11.6" height="1.8" fill="#5b78c4"/><g transform="translate(12.2,0.4) scale(0.85)"><path d="M0 0 l1.1 2.3 2.5 .3 -1.8 1.8 .5 2.5 -2.3 -1.2 -2.3 1.2 .5 -2.5 -1.8 -1.8 2.5 -.3z" fill="#ffe277" stroke="#e9b445" stroke-width=".45"/></g></svg>
<svg style="left:155.00px;top:41.30px" width="15.40" height="15.20" viewBox="0 0 15.4 15.2"><path d="M3.4 6.4 L2.4 0.6 H8.2 L9.8 6.4Z" fill="#9cc3ee" stroke="#6f9fd4" stroke-width=".6"/><path d="M1 9 L3.4 6.2 H11.6 L14.4 9 V12.4 L8 14.6 L1 12.4Z" fill="url(#gS)" stroke="#8a8a8a" stroke-width=".7"/><path d="M1 9 L8 11 L14.4 9" fill="none" stroke="#8a8a8a" stroke-width=".6"/><path d="M4 12.2 L8 13.4 L12 12" stroke="#555" stroke-width=".9" fill="none"/><path d="M7.6 13.6 h1.6" stroke="#e0a030" stroke-width=".8"/></svg>
<svg style="left:188.00px;top:43.00px" width="13.50" height="12.30" viewBox="0 0 13.5 12.3"><path d="M0.6 5 L6 0.6 V3.2 C10.6 3 13 5.6 12.8 8.6 C12.6 10.6 11 11.8 9 11.8 C10.4 10.6 10.6 8.8 9.4 7.6 C8.6 6.9 7.4 6.8 6 6.9 V9.4 Z" fill="url(#gU)" stroke="#4a639c" stroke-width=".7" stroke-linejoin="round"/></svg>
<svg style="left:216.70px;top:41.90px" width="17.00" height="13.60" viewBox="0 0 17 13.6"><rect x="3" y="1.6" width="11" height="11.4" fill="url(#gP)" stroke="#7a8fc0" stroke-width=".9"/><circle cx="8" cy="6.6" r="4.4" fill="#dfeaf8" stroke="#8aa6d8" stroke-width="1.1"/><path d="M4.8 9.8 L1 12.6" stroke="#e0a23a" stroke-width="1.6" stroke-linecap="round"/><rect x="6.2" y="4" width="2.4" height="2.4" fill="#f0b030" stroke="#b87a10" stroke-width=".4"/><rect x="9" y="7" width="2.4" height="2.4" fill="#f0b030" stroke="#b87a10" stroke-width=".4"/><path d="M7.4 6.4 V8.2 H9" stroke="#6a5a30" stroke-width=".5" fill="none"/><g transform="translate(14.4,0.2) scale(0.8)"><path d="M0 0 l1.1 2.3 2.5 .3 -1.8 1.8 .5 2.5 -2.3 -1.2 -2.3 1.2 .5 -2.5 -1.8 -1.8 2.5 -.3z" fill="#ffe277" stroke="#e9b445" stroke-width=".45"/></g></svg>
<svg style="left:747.60px;top:44.20px" width="10.40" height="10.40" viewBox="0 0 10.4 10.4"><circle cx="5.2" cy="5.2" r="4.8" fill="url(#gH)" stroke="#2a5fc0" stroke-width=".6"/><text x="5.2" y="8.3" font-family="Liberation Sans" font-weight="bold" font-size="8.6" text-anchor="middle" fill="#fff">?</text></svg>
<svg style="left:74.20px;top:64.70px" width="10.60" height="10.00" viewBox="0 0 10.6 10"><rect x="2.2" y=".8" width="7.6" height="8" fill="url(#gP)" stroke="#5f6f90" stroke-width=".8"/><circle cx="5.6" cy="4.6" r="2.7" fill="#dfeaf8" stroke="#6a86c0" stroke-width=".8"/><path d="M3.6 6.6 L0.8 9.2" stroke="#e0a23a" stroke-width="1.3" stroke-linecap="round"/><rect x="4.6" y="3.2" width="1.4" height="1.4" fill="#f0b030"/><rect x="6" y="4.8" width="1.4" height="1.4" fill="#f0b030"/></svg>
<svg style="left:61.00px;top:83.70px" width="10.00" height="10.00" viewBox="0 0 10 10"><path d="M6.65 2.13 A3.3 3.3 0 1 0 8.30 5.83" fill="none" stroke="#333" stroke-width="1.1"/><path d="M5.66 3.19 h3.13 v-3.13z" fill="#333"/></svg>
<svg style="left:74.40px;top:86.35px" width="5.00" height="3.30" viewBox="0 0 5 3.3"><path d="M0 0h5l-2.5 3.3z" fill="#333"/></svg>
<svg style="left:127.20px;top:84.80px" width="7.60" height="7.20" viewBox="0 0 7.6 7.2"><path d="M0 0 H7.6 V1 L4.7 3.8 V7.2 H2.9 V3.8 L0 1Z" fill="#3b5876"/></svg>
<svg style="left:152.20px;top:83.60px" width="10.00" height="9.60" viewBox="0 0 10 9.6"><ellipse cx="5" cy="4.8" rx="4.7" ry="4.5" fill="url(#gR)"/><ellipse cx="5" cy="2.6" rx="3" ry="1.6" fill="#fff" opacity=".55"/></svg>
<svg style="left:171.60px;top:83.90px" width="9.40" height="9.20" viewBox="0 0 9.4 9.2"><rect x=".4" y=".4" width="8.6" height="8.4" fill="#d8d8d8" stroke="#555" stroke-width=".8"/><rect x="1.5" y="1.5" width="6.4" height="6.2" fill="#ea1717"/></svg>
<svg style="left:190.00px;top:84.00px" width="10.00" height="9.30" viewBox="0 0 10 9.3"><rect x=".5" y=".5" width="6.6" height="6" rx=".8" fill="#e8e8e8" stroke="#444" stroke-width=".9"/><rect x="2.7" y="2.7" width="6.8" height="6.1" rx=".8" fill="#e26464" stroke="#444" stroke-width=".9"/></svg>
<svg style="left:208.00px;top:84.60px" width="13.00" height="10.00" viewBox="0 0 13 10"><path d="M0.6 8.6 L2.4 6.6 L2.2 4.4 L4.4 2 H6.8" fill="none" stroke="#888" stroke-width=".8"/><rect x="7.2" y=".5" width="4" height="5.2" rx=".7" fill="#fff" stroke="#222" stroke-width=".9"/><rect x="7.4" y=".6" width="3.6" height="2" fill="#222"/><rect x="8.9" y=".8" width=".7" height="1.5" fill="#fff"/><path d="M9.2 5.5 C9.2 8 11 8.6 12.6 9.4" fill="none" stroke="#888" stroke-width=".8"/></svg>
<svg style="left:12.60px;top:104.30px" width="4.40" height="4.40" viewBox="0 0 4.4 4.4"><path d="M4.4 0 V4.4 H0Z" fill="#404040"/></svg>
<svg style="left:19.70px;top:101.00px" width="11.40" height="9.40" viewBox="0 0 11.4 9.4"><path d="M2 2.4 C3.4 .5 6.6 .3 8 1.6 L6.4 3.2 L8.8 4.6 L10.8 6.4 L9.6 7.6 L6.2 5.2 C4.4 6 2.4 5.4 1.6 4.2 Z" fill="#ededed" stroke="#3c3c3c" stroke-width="1.15" stroke-linejoin="round"/><path d="M3 6.6 L9.2 9" stroke="#4a4a4a" stroke-width="1.2"/><path d="M.8 4.8 L4 7.4" stroke="#555" stroke-width="1"/></svg>
<svg style="left:23.80px;top:117.00px" width="4.40" height="4.40" viewBox="0 0 4.4 4.4"><path d="M4.4 0 V4.4 H0Z" fill="#2a3a50"/></svg>
<svg style="left:30.90px;top:113.80px" width="10.80" height="10.80" viewBox="0 0 10.8 10.8"><rect x="1" y=".3" width="5.8" height="10" rx="1.2" fill="#1c2430"/><rect x="1.8" y="1.6" width="4.2" height="7" fill="#3b7fd8"/><path d="M2.4 2.4h1.2v1.2h-1.2zM4.2 2.4h1.2v1.2h-1.2z" fill="#f6d23a"/><path d="M2.4 4.4h1.2v1.2h-1.2zM4.2 6.2h1.2v1.2h-1.2z" fill="#5fe05f"/><path d="M4.2 4.4h1.2v1.2h-1.2zM2.4 6.2h1.2v1.2h-1.2z" fill="#ff6a5a"/><rect x="5.6" y="6.4" width="4.4" height="4.2" fill="#fff" stroke="#222" stroke-width=".7"/><rect x="6.7" y="7.4" width="2.2" height="2.2" fill="#e02020"/><path d="M8 7 L10.4 4.8" stroke="#c03030" stroke-width=".8"/></svg>
<svg style="left:47.30px;top:116.50px" width="6.20" height="5.30" viewBox="0 0 6.2 5.3"><path d="M2.9 4.9 C.8 3.4 .1 2.4 .3 1.5 C.6 .3 2.1 .1 2.9 1.1 C3.7 .1 5.2 .3 5.5 1.5 C5.7 2.4 5 3.4 2.9 4.9Z" fill="#ee1c1c" stroke="#ee1c1c" stroke-width=".5"/><ellipse cx="1.9" cy="1.5" rx=".8" ry=".5" fill="#ff9a9a"/></svg>
<svg style="left:35.20px;top:129.50px" width="4.00" height="6.40" viewBox="0 0 4 6.4"><path d="M.5 .6 L3.5 3.2 L.5 5.8Z" fill="#fff" stroke="#9a9a9a" stroke-width=".8"/></svg>
<svg style="left:35.20px;top:142.60px" width="4.00" height="6.40" viewBox="0 0 4 6.4"><path d="M.5 .6 L3.5 3.2 L.5 5.8Z" fill="#fff" stroke="#9a9a9a" stroke-width=".8"/></svg>
<svg style="left:43.50px;top:127.30px" width="9.00" height="9.80" viewBox="0 0 9 9.8"><path d="M.6 1 H4.6 L5.4 2 H8.2 V9.2 H.6Z" fill="#f2c766" stroke="#e0a640" stroke-width=".6"/><path d="M.9 9 V3 H4.4 L5.2 2.2 H8 V9Z" fill="url(#gY)"/><path d="M4.6 2.4 V8.8" stroke="#e7a73a" stroke-width=".9"/><path d="M5.6 5.2 h1.6" stroke="#d89a3a" stroke-width=".7"/></svg>
<svg style="left:42.20px;top:140.20px" width="10.80" height="10.20" viewBox="0 0 10.8 10.2"><rect x=".4" y=".4" width="10" height="9.4" fill="#fdfdfd" stroke="#8d8d8d" stroke-width=".8"/><rect x="2.4" y="2.3" width="6" height="5.6" fill="#fff" stroke="#7a8288" stroke-width=".8"/></svg>
<svg style="left:236.00px;top:125.00px" width="4.40" height="4.40" viewBox="0 0 4.4 4.4"><path d="M4.4 0 V4.4 H0Z" fill="#404040"/></svg>
<svg style="left:243.00px;top:121.50px" width="11.20" height="10.40" viewBox="0 0 11.2 10.4"><path d="M1 3.6 L4.6 .5 H10.6 L7.4 3.6Z" fill="#1a1a1a" stroke="#111" stroke-width=".5"/><path d="M7.4 3.6 L10.6 .5 V6.6 L7.4 9.8Z" fill="#2f8d2f" stroke="#111" stroke-width=".6"/><rect x="1" y="3.6" width="6.4" height="6.2" fill="#5de35a" stroke="#222" stroke-width=".7"/></svg>
<svg style="left:246.40px;top:137.50px" width="4.40" height="4.40" viewBox="0 0 4.4 4.4"><path d="M4.4 0 V4.4 H0Z" fill="#404040"/></svg>
<svg style="left:253.40px;top:135.00px" width="10.80" height="8.80" viewBox="0 0 10.8 8.8"><g opacity="1"><path d="M1.4 1.4 Q1.4 .5 2.4 .5 H5 L6 1.5 H9 Q10 1.5 10 2.4 V7.4 Q10 8.3 9 8.3 H2.4 Q1.4 8.3 1.4 7.4Z" fill="#7fd86a" stroke="#4cb642" stroke-width=".6"/><path d="M.7 3.6 Q.7 2.8 1.6 2.8 H9.4 Q10.2 2.8 10.2 3.6 V7.4 Q10.2 8.3 9.3 8.3 H1.6 Q.7 8.3 .7 7.4Z" fill="url(#gF)" stroke="#55c048" stroke-width=".5"/></g></svg>
<svg style="left:264.00px;top:147.00px" width="11.00" height="10.80" viewBox="0 0 11 10.8"><rect x=".5" y=".5" width="10" height="9.8" rx="1.4" fill="#fff" stroke="#4a4a4a" stroke-width=".9"/><rect x="2.2" y="1.4" width="6.6" height="8" fill="#2b78c8"/><path d="M2.2 1.4 H8.8 V3 H2.2Z" fill="#6fc06a"/><path d="M2.2 6 C3.6 4.6 4.6 5.4 5.2 6.8 L4.6 9.4 H2.2Z" fill="#1a4c9a"/><path d="M5.4 3.4 L6.8 2.8 L7.4 4.4 L6.6 5.2 L8 7.6 L8.4 9.4 H4.6 L5.6 6.4 L5 4.6Z" fill="#f1c22e"/><path d="M5.4 3.4 L6.4 4.6 L5.6 6.4" stroke="#3a2a10" stroke-width=".6" fill="none"/></svg>
<svg style="left:264.00px;top:159.55px" width="11.00" height="10.80" viewBox="0 0 11 10.8"><rect x=".5" y=".5" width="10" height="9.8" rx="1.4" fill="#fff" stroke="#4a4a4a" stroke-width=".9"/><rect x="2.2" y="1.4" width="6.6" height="8" fill="#2b78c8"/><path d="M2.2 1.4 H8.8 V3 H2.2Z" fill="#6fc06a"/><path d="M2.2 6 C3.6 4.6 4.6 5.4 5.2 6.8 L4.6 9.4 H2.2Z" fill="#1a4c9a"/><path d="M5.4 3.4 L6.8 2.8 L7.4 4.4 L6.6 5.2 L8 7.6 L8.4 9.4 H4.6 L5.6 6.4 L5 4.6Z" fill="#f1c22e"/><path d="M5.4 3.4 L6.4 4.6 L5.6 6.4" stroke="#3a2a10" stroke-width=".6" fill="none"/></svg>
<svg style="left:264.00px;top:172.10px" width="11.00" height="10.80" viewBox="0 0 11 10.8"><rect x=".5" y=".5" width="10" height="9.8" rx="1.4" fill="#fff" stroke="#4a4a4a" stroke-width=".9"/><rect x="2.2" y="1.4" width="6.6" height="8" fill="#2b78c8"/><path d="M2.2 1.4 H8.8 V3 H2.2Z" fill="#6fc06a"/><path d="M2.2 6 C3.6 4.6 4.6 5.4 5.2 6.8 L4.6 9.4 H2.2Z" fill="#1a4c9a"/><path d="M5.4 3.4 L6.8 2.8 L7.4 4.4 L6.6 5.2 L8 7.6 L8.4 9.4 H4.6 L5.6 6.4 L5 4.6Z" fill="#f1c22e"/><path d="M5.4 3.4 L6.4 4.6 L5.6 6.4" stroke="#3a2a10" stroke-width=".6" fill="none"/></svg>
<svg style="left:264.00px;top:184.65px" width="11.00" height="10.80" viewBox="0 0 11 10.8"><rect x=".5" y=".5" width="10" height="9.8" rx="1.4" fill="#fff" stroke="#4a4a4a" stroke-width=".9"/><rect x="2.2" y="1.4" width="6.6" height="8" fill="#2b78c8"/><path d="M2.2 1.4 H8.8 V3 H2.2Z" fill="#6fc06a"/><path d="M2.2 6 C3.6 4.6 4.6 5.4 5.2 6.8 L4.6 9.4 H2.2Z" fill="#1a4c9a"/><path d="M5.4 3.4 L6.8 2.8 L7.4 4.4 L6.6 5.2 L8 7.6 L8.4 9.4 H4.6 L5.6 6.4 L5 4.6Z" fill="#f1c22e"/><path d="M5.4 3.4 L6.4 4.6 L5.6 6.4" stroke="#3a2a10" stroke-width=".6" fill="none"/></svg>
<svg style="left:264.00px;top:197.20px" width="11.00" height="10.80" viewBox="0 0 11 10.8"><rect x=".5" y=".5" width="10" height="9.8" rx="1.4" fill="#fff" stroke="#4a4a4a" stroke-width=".9"/><rect x="2.2" y="1.4" width="6.6" height="8" fill="#2b78c8"/><path d="M2.2 1.4 H8.8 V3 H2.2Z" fill="#6fc06a"/><path d="M2.2 6 C3.6 4.6 4.6 5.4 5.2 6.8 L4.6 9.4 H2.2Z" fill="#1a4c9a"/><path d="M5.4 3.4 L6.8 2.8 L7.4 4.4 L6.6 5.2 L8 7.6 L8.4 9.4 H4.6 L5.6 6.4 L5 4.6Z" fill="#f1c22e"/><path d="M5.4 3.4 L6.4 4.6 L5.6 6.4" stroke="#3a2a10" stroke-width=".6" fill="none"/></svg>
<svg style="left:264.00px;top:209.75px" width="11.00" height="10.80" viewBox="0 0 11 10.8"><rect x=".5" y=".5" width="10" height="9.8" rx="1.4" fill="#fff" stroke="#4a4a4a" stroke-width=".9"/><rect x="2.2" y="1.4" width="6.6" height="8" fill="#2b78c8"/><path d="M2.2 1.4 H8.8 V3 H2.2Z" fill="#6fc06a"/><path d="M2.2 6 C3.6 4.6 4.6 5.4 5.2 6.8 L4.6 9.4 H2.2Z" fill="#1a4c9a"/><path d="M5.4 3.4 L6.8 2.8 L7.4 4.4 L6.6 5.2 L8 7.6 L8.4 9.4 H4.6 L5.6 6.4 L5 4.6Z" fill="#f1c22e"/><path d="M5.4 3.4 L6.4 4.6 L5.6 6.4" stroke="#3a2a10" stroke-width=".6" fill="none"/></svg>
<svg style="left:264.00px;top:222.30px" width="11.00" height="10.80" viewBox="0 0 11 10.8"><rect x=".5" y=".5" width="10" height="9.8" rx="1.4" fill="#fff" stroke="#4a4a4a" stroke-width=".9"/><rect x="2.2" y="1.4" width="6.6" height="8" fill="#2b78c8"/><path d="M2.2 1.4 H8.8 V3 H2.2Z" fill="#6fc06a"/><path d="M2.2 6 C3.6 4.6 4.6 5.4 5.2 6.8 L4.6 9.4 H2.2Z" fill="#1a4c9a"/><path d="M5.4 3.4 L6.8 2.8 L7.4 4.4 L6.6 5.2 L8 7.6 L8.4 9.4 H4.6 L5.6 6.4 L5 4.6Z" fill="#f1c22e"/><path d="M5.4 3.4 L6.4 4.6 L5.6 6.4" stroke="#3a2a10" stroke-width=".6" fill="none"/></svg>
<svg style="left:264.00px;top:234.85px" width="11.00" height="10.80" viewBox="0 0 11 10.8"><rect x=".5" y=".5" width="10" height="9.8" rx="1.4" fill="#fff" stroke="#4a4a4a" stroke-width=".9"/><rect x="2.2" y="1.4" width="6.6" height="8" fill="#2b78c8"/><path d="M2.2 1.4 H8.8 V3 H2.2Z" fill="#6fc06a"/><path d="M2.2 6 C3.6 4.6 4.6 5.4 5.2 6.8 L4.6 9.4 H2.2Z" fill="#1a4c9a"/><path d="M5.4 3.4 L6.8 2.8 L7.4 4.4 L6.6 5.2 L8 7.6 L8.4 9.4 H4.6 L5.6 6.4 L5 4.6Z" fill="#f1c22e"/><path d="M5.4 3.4 L6.4 4.6 L5.6 6.4" stroke="#3a2a10" stroke-width=".6" fill="none"/></svg>
<svg style="left:264.00px;top:247.40px" width="11.00" height="10.80" viewBox="0 0 11 10.8"><rect x=".5" y=".5" width="10" height="9.8" rx="1.4" fill="#fff" stroke="#4a4a4a" stroke-width=".9"/><rect x="2.2" y="1.4" width="6.6" height="8" fill="#2b78c8"/><path d="M2.2 1.4 H8.8 V3 H2.2Z" fill="#6fc06a"/><path d="M2.2 6 C3.6 4.6 4.6 5.4 5.2 6.8 L4.6 9.4 H2.2Z" fill="#1a4c9a"/><path d="M5.4 3.4 L6.8 2.8 L7.4 4.4 L6.6 5.2 L8 7.6 L8.4 9.4 H4.6 L5.6 6.4 L5 4.6Z" fill="#f1c22e"/><path d="M5.4 3.4 L6.4 4.6 L5.6 6.4" stroke="#3a2a10" stroke-width=".6" fill="none"/></svg>
<svg style="left:264.00px;top:259.95px" width="11.00" height="10.80" viewBox="0 0 11 10.8"><rect x=".5" y=".5" width="10" height="9.8" rx="1.4" fill="#fff" stroke="#4a4a4a" stroke-width=".9"/><rect x="2.2" y="1.4" width="6.6" height="8" fill="#2b78c8"/><path d="M2.2 1.4 H8.8 V3 H2.2Z" fill="#6fc06a"/><path d="M2.2 6 C3.6 4.6 4.6 5.4 5.2 6.8 L4.6 9.4 H2.2Z" fill="#1a4c9a"/><path d="M5.4 3.4 L6.8 2.8 L7.4 4.4 L6.6 5.2 L8 7.6 L8.4 9.4 H4.6 L5.6 6.4 L5 4.6Z" fill="#f1c22e"/><path d="M5.4 3.4 L6.4 4.6 L5.6 6.4" stroke="#3a2a10" stroke-width=".6" fill="none"/></svg>
<svg style="left:264.00px;top:272.50px" width="11.00" height="10.80" viewBox="0 0 11 10.8"><rect x=".5" y=".5" width="10" height="9.8" rx="1.4" fill="#fff" stroke="#4a4a4a" stroke-width=".9"/><rect x="2.2" y="1.4" width="6.6" height="8" fill="#2b78c8"/><path d="M2.2 1.4 H8.8 V3 H2.2Z" fill="#6fc06a"/><path d="M2.2 6 C3.6 4.6 4.6 5.4 5.2 6.8 L4.6 9.4 H2.2Z" fill="#1a4c9a"/><path d="M5.4 3.4 L6.8 2.8 L7.4 4.4 L6.6 5.2 L8 7.6 L8.4 9.4 H4.6 L5.6 6.4 L5 4.6Z" fill="#f1c22e"/><path d="M5.4 3.4 L6.4 4.6 L5.6 6.4" stroke="#3a2a10" stroke-width=".6" fill="none"/></svg>
<svg style="left:246.60px;top:287.35px" width="4.00" height="6.40" viewBox="0 0 4 6.4"><path d="M.5 .6 L3.5 3.2 L.5 5.8Z" fill="#fff" stroke="#aaa" stroke-width=".8"/></svg>
<svg style="left:253.40px;top:285.95px" width="10.80" height="8.80" viewBox="0 0 10.8 8.8"><g opacity="1"><path d="M1.4 1.4 Q1.4 .5 2.4 .5 H5 L6 1.5 H9 Q10 1.5 10 2.4 V7.4 Q10 8.3 9 8.3 H2.4 Q1.4 8.3 1.4 7.4Z" fill="#7fd86a" stroke="#4cb642" stroke-width=".6"/><path d="M.7 3.6 Q.7 2.8 1.6 2.8 H9.4 Q10.2 2.8 10.2 3.6 V7.4 Q10.2 8.3 9.3 8.3 H1.6 Q.7 8.3 .7 7.4Z" fill="url(#gF)" stroke="#55c048" stroke-width=".5"/></g></svg>
<svg style="left:406.40px;top:105.10px" width="6.60" height="9.00" viewBox="0 0 6.6 9"><path d="M.4 .4 L6.2 4.5 L.4 8.6Z" fill="#1e9a22" stroke="#147a18" stroke-width=".7" stroke-linejoin="round"/></svg>
<svg style="left:430.00px;top:104.00px" width="11.80" height="10.90" viewBox="0 0 11.8 10.9"><g opacity="1"><rect x="1.8" y=".5" width="9.4" height="9.8" rx="1" fill="#fbfbfb" stroke="#1a1a1a" stroke-width=".9"/><path d="M1.8 2.2 H11.2" stroke="#1a1a1a" stroke-width="1"/><path d="M0 5.6 H4.6 M3.2 4 L4.9 5.6 L3.2 7.2" stroke="#1a1a1a" stroke-width=".9" fill="none"/><path d="M6.2 4h3.4M6.2 5.8h3.4M6.2 7.6h3.4" stroke="#1a1a1a" stroke-width=".9"/></g></svg>
<svg style="left:452.00px;top:104.00px" width="11.80" height="10.90" viewBox="0 0 11.8 10.9"><g opacity="0.9"><rect x="1.8" y=".5" width="9.4" height="9.8" rx="1" fill="#fbfbfb" stroke="#8f8f8f" stroke-width=".9"/><path d="M1.8 2.2 H11.2" stroke="#8f8f8f" stroke-width="1"/><path d="M0 5.6 H4.6 M3.2 4 L4.9 5.6 L3.2 7.2" stroke="#8f8f8f" stroke-width=".9" fill="none"/><path d="M6.2 4h3.4M6.2 5.8h3.4M6.2 7.6h3.4" stroke="#8f8f8f" stroke-width=".9"/></g><rect x="9.6" y="8" width="1.8" height="1.8" fill="#3a7ad0"/><rect x="10.4" y="8.8" width="1.2" height="1.2" fill="#3ab03a"/></svg>
<svg style="left:404.50px;top:124.00px" width="11.20" height="10.90" viewBox="0 0 11.2 10.9"><circle cx="4.6" cy="4.4" r="4.1" fill="#ee7f86"/><ellipse cx="4.2" cy="2.6" rx="2.6" ry="1.4" fill="#f7b3b6" opacity=".8"/><rect x="2.2" y="3.8" width="4.8" height="1.4" fill="#fff"/><g transform="translate(6.0,4.8) scale(.85)" opacity="0.85"><path d="M2.7 0 L4.6 2 L2.7 4 L.8 2Z" fill="#f4ecc8" stroke="#a89868" stroke-width=".55"/><path d="M.2 6.6 L1.4 4.2 H4 L5.2 6.6Z" fill="#e6d8a0" stroke="#a89868" stroke-width=".55"/></g></svg>
<svg style="left:430.90px;top:124.40px" width="11.00" height="10.50" viewBox="0 0 11 10.5"><circle cx="3.6" cy="3.4" r="2.8" fill="#e4e4e4" stroke="#bcbcbc" stroke-width=".7" stroke-dasharray="1 .7"/><g transform="translate(5.6,4.4) scale(.85)" opacity="0.6375"><path d="M2.7 0 L4.6 2 L2.7 4 L.8 2Z" fill="#f4ecc8" stroke="#a89868" stroke-width=".55"/><path d="M.2 6.6 L1.4 4.2 H4 L5.2 6.6Z" fill="#e6d8a0" stroke="#a89868" stroke-width=".55"/></g></svg>
<svg style="left:449.40px;top:124.40px" width="11.00" height="10.50" viewBox="0 0 11 10.5"><path d="M.6 .6 L6 5.6 M6 .6 L.6 5.6" stroke="#e58a8a" stroke-width="1.1"/><g transform="translate(5.6,4.4) scale(.85)" opacity="0.6375"><path d="M2.7 0 L4.6 2 L2.7 4 L.8 2Z" fill="#f4ecc8" stroke="#a89868" stroke-width=".55"/><path d="M.2 6.6 L1.4 4.2 H4 L5.2 6.6Z" fill="#e6d8a0" stroke="#a89868" stroke-width=".55"/></g></svg>
<svg style="left:468.90px;top:124.20px" width="10.40" height="10.70" viewBox="0 0 10.4 10.7"><path d="M3.6 0 L1 3.4 H3.2 L1.6 6.4 L6 2.6 H3.6 L5.4 0Z" fill="#f5d978" stroke="#e3c257" stroke-width=".4"/><g transform="translate(5.0,4.6) scale(.85)" opacity="0.6375"><path d="M2.7 0 L4.6 2 L2.7 4 L.8 2Z" fill="#f4ecc8" stroke="#a89868" stroke-width=".55"/><path d="M.2 6.6 L1.4 4.2 H4 L5.2 6.6Z" fill="#e6d8a0" stroke="#a89868" stroke-width=".55"/></g></svg>
<svg style="left:487.00px;top:124.60px" width="11.00" height="10.30" viewBox="0 0 11 10.3"><rect x=".6" y=".4" width="5" height="6" fill="#e4eefa" stroke="#b7cbe6" stroke-width=".7"/><g transform="translate(5.6,4.2) scale(.85)" opacity="0.6375"><path d="M2.7 0 L4.6 2 L2.7 4 L.8 2Z" fill="#f4ecc8" stroke="#a89868" stroke-width=".55"/><path d="M.2 6.6 L1.4 4.2 H4 L5.2 6.6Z" fill="#e6d8a0" stroke="#a89868" stroke-width=".55"/></g></svg>
<svg style="left:511.70px;top:124.80px" width="9.20" height="9.40" viewBox="0 0 9.2 9.4"><g opacity="1"><rect x=".4" y=".4" width="5" height="2.2" fill="#2b3a50" /><rect x=".4" y="6.8" width="5" height="2.2" fill="#2b3a50"/><path d="M2.9 2.6 V6.8" stroke="#e02a2a" stroke-width=".9"/></g><g transform="translate(6,-0.6) scale(0.85)"><path d="M0 0 l1.1 2.3 2.5 .3 -1.8 1.8 .5 2.5 -2.3 -1.2 -2.3 1.2 .5 -2.5 -1.8 -1.8 2.5 -.3z" fill="#ffe277" stroke="#e9b445" stroke-width=".45"/></g></svg>
<svg style="left:528.90px;top:124.20px" width="11.60" height="10.80" viewBox="0 0 11.6 10.8"><rect x=".5" y="1.6" width="6" height="2.4" fill="#c9d8ea" stroke="#8aa4c4" stroke-width=".6"/><path d="M3.4 0 V1.6" stroke="#e03030" stroke-width=".8"/><g transform="translate(6.199999999999999,4.8) scale(.85)" opacity="0.765"><path d="M2.7 0 L4.6 2 L2.7 4 L.8 2Z" fill="#f4ecc8" stroke="#a89868" stroke-width=".55"/><path d="M.2 6.6 L1.4 4.2 H4 L5.2 6.6Z" fill="#e6d8a0" stroke="#a89868" stroke-width=".55"/></g></svg>
<svg style="left:547.90px;top:124.60px" width="11.40" height="10.40" viewBox="0 0 11.4 10.4"><rect x=".5" y=".6" width="6" height="2.4" fill="#c9d8ea" stroke="#8aa4c4" stroke-width=".6"/><path d="M3.4 3 V4.4" stroke="#e03030" stroke-width=".8"/><g transform="translate(6.0,4.4) scale(.85)" opacity="0.765"><path d="M2.7 0 L4.6 2 L2.7 4 L.8 2Z" fill="#f4ecc8" stroke="#a89868" stroke-width=".55"/><path d="M.2 6.6 L1.4 4.2 H4 L5.2 6.6Z" fill="#e6d8a0" stroke="#a89868" stroke-width=".55"/></g></svg>
<svg style="left:568.70px;top:125.00px" width="9.20" height="9.40" viewBox="0 0 9.2 9.4"><g opacity="0.9"><rect x=".4" y=".4" width="5" height="2.2" fill="#8fa6bd" /><rect x=".4" y="6.8" width="5" height="2.2" fill="#8fa6bd"/><path d="M2.9 2.6 V6.8" stroke="#e02a2a" stroke-width=".9"/></g></svg>
<svg style="left:587.00px;top:124.80px" width="9.60" height="9.60" viewBox="0 0 9.6 9.6"><rect x=".4" y=".4" width="4.6" height="2.2" fill="#a9bcd0"/><rect x=".4" y="6.4" width="4.6" height="2.2" fill="#a9bcd0"/><path d="M2.7 2.6V6.4" stroke="#e8a0a0" stroke-width=".8"/><path d="M5.4 1.4 C8.8 1.4 8.8 7.6 5.4 7.6" fill="none" stroke="#666" stroke-width=".8"/></svg>
<svg style="left:610.40px;top:126.60px" width="10.00" height="5.60" viewBox="0 0 10 5.6"><rect x=".4" y=".4" width="2" height="4.6" fill="#c4d4e8" stroke="#8fa6c4" stroke-width=".6"/><rect x="7.4" y=".4" width="2" height="4.6" fill="#c4d4e8" stroke="#8fa6c4" stroke-width=".6"/><path d="M2.6 2.7 H7.2" stroke="#999" stroke-width=".7"/><path d="M4.2 1.9 L5.4 2.7 L4.2 3.5Z" fill="#e03030"/></svg>
<svg style="left:628.40px;top:125.20px" width="10.60" height="7.60" viewBox="0 0 10.6 7.6"><rect x=".4" y=".4" width="2" height="4.2" fill="#c4d4e8" stroke="#8fa6c4" stroke-width=".6"/><rect x="8" y="3" width="2" height="4.2" fill="#c4d4e8" stroke="#8fa6c4" stroke-width=".6"/><path d="M2.6 2.4 H5.2 V5.2 H7.8" fill="none" stroke="#777" stroke-width=".7"/><circle cx="6.6" cy="1.2" r=".8" fill="#f0a080"/></svg>
<svg style="left:651.40px;top:125.40px" width="10.60" height="7.60" viewBox="0 0 10.6 7.6"><rect x=".4" y=".4" width="2" height="4.2" fill="#c4d4e8" stroke="#8fa6c4" stroke-width=".6"/><rect x="8" y="3" width="2" height="4.2" fill="#c4d4e8" stroke="#8fa6c4" stroke-width=".6"/><path d="M2.6 2.4 H5.2 V5.2 H7.8" fill="none" stroke="#777" stroke-width=".7"/></svg>
<svg style="left:663.60px;top:127.90px" width="4.40" height="2.80" viewBox="0 0 4.4 2.8"><path d="M0 0h4.4l-2.2 2.8z" fill="#555"/></svg>
<svg style="left:743.60px;top:124.20px" width="10.00" height="10.00" viewBox="0 0 10.0 10.0"><circle cx="5.0" cy="5.0" r="4.6" fill="url(#gH)" stroke="#2a5fc0" stroke-width=".6"/><text x="5.0" y="8.1" font-family="Liberation Sans" font-weight="bold" font-size="8.2" text-anchor="middle" fill="#fff">?</text></svg>
<svg style="left:403.80px;top:142.90px" width="11.80" height="11.80" viewBox="0 0 11.8 11.8"><rect x=".3" y=".2" width="1.4" height="11.4" fill="#3a2f6a"/><rect x="9.9" y=".2" width="1.4" height="11.4" fill="#3a2f6a"/><rect x="2" y="1.4" width="7.4" height="5.4" fill="#f6a623" stroke="#d88410" stroke-width=".5"/><rect x="2" y="7.2" width="5.4" height="3.8" fill="#3b7be0" stroke="#2a5ab0" stroke-width=".5"/><rect x="3" y="8.2" width="2.6" height="1.8" fill="#e8f0ff"/><g transform="translate(8,1.6) scale(0.9)"><path d="M0 0 l1.1 2.3 2.5 .3 -1.8 1.8 .5 2.5 -2.3 -1.2 -2.3 1.2 .5 -2.5 -1.8 -1.8 2.5 -.3z" fill="#ffe277" stroke="#e9b445" stroke-width=".45"/></g></svg>
<svg style="left:429.60px;top:143.20px" width="10.40" height="11.20" viewBox="0 0 11 11.2"><path d="M.6 0V11" stroke="#8c97b5" stroke-width="1"/><rect x="2" y="1.4" width="5.6" height="3.6" fill="#f4c77a" stroke="#e7b565" stroke-width=".4"/><rect x="2" y="6" width="7" height="4.2" fill="#c5d3e8" stroke="#9fb3d0" stroke-width=".5"/></svg>
<svg style="left:449.60px;top:143.20px" width="10.40" height="11.20" viewBox="0 0 11 11.2"><path d="M9 0V11" stroke="#8c97b5" stroke-width="1"/><rect x="2.4" y="1.4" width="5.6" height="3.6" fill="#f4c77a" stroke="#e7b565" stroke-width=".4"/><rect x="1" y="6" width="7" height="4.2" fill="#c5d3e8" stroke="#9fb3d0" stroke-width=".5"/></svg>
<svg style="left:467.40px;top:143.00px" width="11.30" height="11.20" viewBox="0 0 11 11.2"><path d="M0 .6H11" stroke="#8c97b5" stroke-width="1"/><rect x="1" y="2" width="4.2" height="4.6" fill="#f4c77a" stroke="#e7b565" stroke-width=".4"/><rect x="6.2" y="2" width="4" height="7" fill="#c5d3e8" stroke="#9fb3d0" stroke-width=".5"/></svg>
<svg style="left:486.50px;top:143.60px" width="11.10" height="11.20" viewBox="0 0 11 11.2"><path d="M0 10.4H11" stroke="#8c97b5" stroke-width="1"/><rect x="1" y="5.2" width="4.2" height="4.4" fill="#f4c77a" stroke="#e7b565" stroke-width=".4"/><rect x="6.2" y="2.4" width="4" height="7.2" fill="#c5d3e8" stroke="#9fb3d0" stroke-width=".5"/></svg>
<svg style="left:506.00px;top:143.20px" width="11.00" height="11.20" viewBox="0 0 11 11.2"><path d="M.6 0V11M10.2 0V11" stroke="#8c97b5" stroke-width="1"/><rect x="2" y="1.4" width="6.8" height="3.6" fill="#f4c77a" stroke="#e7b565" stroke-width=".4"/><rect x="2" y="6" width="6.8" height="4.2" fill="#c5d3e8" stroke="#9fb3d0" stroke-width=".5"/></svg>
<svg style="left:524.70px;top:143.20px" width="11.40" height="11.20" viewBox="0 0 11 11.2"><path d="M0 .6H11M0 10.6H11" stroke="#8c97b5" stroke-width="1"/><rect x="1" y="1.8" width="4.4" height="7.8" fill="#f4c77a" stroke="#e7b565" stroke-width=".4"/><rect x="6" y="1.8" width="4.2" height="7.8" fill="#c5d3e8" stroke="#9fb3d0" stroke-width=".5"/></svg>
<svg style="left:548.80px;top:143.60px" width="11.20" height="11.00" viewBox="0 0 11.2 11"><path d="M.6 .8 L4.8 4.6" stroke="#3a4f9a" stroke-width="1.2"/><path d="M5.4 5.2 L2.6 4.6 L4.8 2.4Z" fill="#3a4f9a"/><rect x="4.8" y="5.4" width="5" height="4.8" rx=".8" fill="#cfe0f8" stroke="#6fa0e0" stroke-width=".8"/><rect x="5.8" y="7" width="1.8" height="2.6" fill="#5f8fd8"/><path d="M8.4 0V3.2M6.8 1.6H10" stroke="#333" stroke-width=".7"/></svg>
<svg style="left:561.00px;top:147.50px" width="4.40" height="2.80" viewBox="0 0 4.4 2.8"><path d="M0 0h4.4l-2.2 2.8z" fill="#555"/></svg>
<svg style="left:813.70px;top:15.60px" width="9.60" height="8.80" viewBox="0 0 9.6 8.8"><rect x="1.6" y=".5" width="7" height="7.4" fill="#f4f6fb" stroke="#7a8fc0" stroke-width=".8"/><rect x="3.4" y="2" width="2" height="2" fill="#f0b030"/><rect x="5.8" y="2.6" width="1.6" height="1.6" fill="#3a7ad0"/><g transform="translate(7.6,-0.2) scale(0.7)"><path d="M0 0 l1.1 2.3 2.5 .3 -1.8 1.8 .5 2.5 -2.3 -1.2 -2.3 1.2 .5 -2.5 -1.8 -1.8 2.5 -.3z" fill="#ffe277" stroke="#e9b445" stroke-width=".45"/></g><ellipse cx="4.8" cy="6.4" rx="2.8" ry="2.3" fill="#e01818"/><ellipse cx="4.2" cy="5.4" rx="1.4" ry=".7" fill="#ff9a9a"/><path d="M1.8 6.8 L.4 8.4" stroke="#e0a23a" stroke-width="1"/></svg>
<svg style="left:8.70px;top:9.00px" width="10.60" height="9.40" viewBox="0 0 10.6 9.4"><path d="M1 2.6 L8 1 L9.6 7.4 L2.6 9Z" fill="#d4e2f4" stroke="#f0a23c" stroke-width="1.1" stroke-dasharray="1.3 .5"/><path d="M4.2 4.4 L5.6 6.2 L9.2 1.6" fill="none" stroke="#3cc03c" stroke-width="1.3"/><path d="M2.6 5.4 L5.4 4.8 M3 7 L6.6 6.2" stroke="#a8bcd8" stroke-width=".6"/></svg>
<svg style="left:817.90px;top:52.00px" width="9.80" height="9.00" viewBox="0 0 9.8 9"><ellipse cx="4.9" cy="4.5" rx="4.6" ry="4.3" fill="url(#gR)"/><ellipse cx="4.9" cy="2.4" rx="3" ry="1.5" fill="#fff" opacity=".5"/></svg>
<svg style="left:837.70px;top:52.50px" width="8.40" height="8.40" viewBox="0 0 8.4 8.4"><rect x=".4" y=".4" width="3" height="7.6" fill="#fbd25a" stroke="#e0a020" stroke-width=".8"/><rect x="4.9" y=".4" width="3" height="7.6" fill="#fbd25a" stroke="#e0a020" stroke-width=".8"/></svg>
<svg style="left:862.00px;top:49.00px" width="15.40" height="14.80" viewBox="0 0 15.4 14.8"><path d="M2.6 7 A5.2 5.2 0 0 1 11.2 3.6" fill="none" stroke="#3d8fea" stroke-width="2.5"/><path d="M13.6 .8 L14.2 7.2 L8.2 6.2Z" fill="#3d8fea" stroke="#2a78d8" stroke-width=".4" stroke-linejoin="round"/><path d="M12.8 7.8 A5.2 5.2 0 0 1 4.2 11.2" fill="none" stroke="#3d8fea" stroke-width="2.5"/><path d="M1.8 14 L1.2 7.6 L7.2 8.6Z" fill="#3d8fea" stroke="#2a78d8" stroke-width=".4" stroke-linejoin="round"/><path d="M3.2 5.6 A4.4 4.4 0 0 1 9.8 3" fill="none" stroke="#8cc0f8" stroke-width=".7"/></svg>
<svg style="left:890.10px;top:52.20px" width="8.50" height="8.60" viewBox="0 0 8.5 8.6"><rect x=".4" y=".4" width="7.7" height="7.8" fill="#f3f3f3" stroke="#8e8f8f" stroke-width=".8"/><rect x="1.5" y="1.5" width="5.5" height="5.6" fill="#e9e9e9" stroke="#d2d2d2" stroke-width=".5"/><path d="M2.2 4.4 L3.6 6.4 L6.4 2" fill="none" stroke="#2a4fa8" stroke-width="1.2"/></svg>
<svg style="left:900.20px;top:52.50px" width="11.60" height="9.20" viewBox="0 0 11.6 9.2"><rect x="4.6" y=".3" width="2.8" height="2.8" fill="#3fd03f" stroke="#1a7a1a" stroke-width=".4"/><rect x="7" y="3" width="2.8" height="2.8" fill="#3fd03f" stroke="#1a8a1a" stroke-width=".4"/><rect x="8.6" y="6" width="2.8" height="2.8" fill="#58d058" stroke="#1a8a1a" stroke-width=".4"/><path d="M.4 5.8 L2 7.2 L.4 8.6Z M2.4 5.8 L4 7.2 L2.4 8.6Z" fill="#2a3f8a"/></svg>
<svg style="left:917.80px;top:52.20px" width="8.50" height="8.60" viewBox="0 0 8.5 8.6"><rect x=".4" y=".4" width="7.7" height="7.8" fill="#f3f3f3" stroke="#8e8f8f" stroke-width=".8"/><rect x="1.5" y="1.5" width="5.5" height="5.6" fill="#e9e9e9" stroke="#d2d2d2" stroke-width=".5"/></svg>
<svg style="left:929.00px;top:51.60px" width="9.00" height="10.20" viewBox="0 0 9 10.2"><rect x="1.6" y=".4" width="6" height="3" fill="#c9d0da" stroke="#a9b4c4" stroke-width=".5"/><rect x="2.4" y="5" width="5.8" height="3" fill="#f4dada" stroke="#e02a2a" stroke-width=".9"/><path d="M.4 9.8 L3 7.4" stroke="#2a4f9a" stroke-width="1"/><path d="M3.6 6.6 L3.4 8.4 L1.8 7Z" fill="#2a4f9a"/></svg>
<svg style="left:945.40px;top:52.20px" width="8.50" height="8.60" viewBox="0 0 8.5 8.6"><rect x=".4" y=".4" width="7.7" height="7.8" fill="#f3f3f3" stroke="#8e8f8f" stroke-width=".8"/><rect x="1.5" y="1.5" width="5.5" height="5.6" fill="#e9e9e9" stroke="#d2d2d2" stroke-width=".5"/></svg>
<svg style="left:956.00px;top:52.50px" width="7.80" height="8.00" viewBox="0 0 7.8 8"><rect x=".7" y=".7" width="6.4" height="6.6" fill="#c8ccd0" stroke="#7fd0f2" stroke-width="1.3"/></svg>
<svg style="left:978.20px;top:49.00px" width="14.00" height="13.80" viewBox="0 0 14 13.8"><path d="M4.6 4.4 L13 8.8 L9.6 9.6 L11.8 12.8 L10.4 13.6 L8.4 10.4 L6.2 12.6Z" fill="#fff" stroke="#1a1a1a" stroke-width="1.05" stroke-linejoin="round"/><path d="M3.6 .4 L4 2.2 M.6 1.4 L2.2 2.8 M.2 4.6 L2 4.4 M6.6 .8 L5.8 2.4" stroke="#444" stroke-width=".8"/></svg>
<svg style="left:1007.90px;top:52.40px" width="5.00" height="9.80" viewBox="0 0 5 9.8"><path d="M.6 .6 L4.2 4.9 L.6 9.2" fill="none" stroke="#8a8a8a" stroke-width="1.2"/></svg>
<svg style="left:832.20px;top:78.60px" width="5.00" height="5.40" viewBox="0 0 5 5.4"><path d="M.8 0 V5.4 M.8 .8 L4.4 2.4 L.8 4Z" fill="#cfe3f2" stroke="#cfe3f2" stroke-width=".6"/></svg>
<svg style="left:841.80px;top:78.60px" width="5.00" height="5.40" viewBox="0 0 5 5.4"><path d="M.8 0 V5.4 M.8 .8 L4.4 2.4 L.8 4Z" fill="#cfe3f2" stroke="#cfe3f2" stroke-width=".6"/></svg>
<svg style="left:852.20px;top:78.20px" width="5.60" height="6.20" viewBox="0 0 5.6 6.2"><path d="M.6 .5 H3.6 V5.6 H.6Z" fill="none" stroke="#cfe3f2" stroke-width=".8"/><circle cx="4.2" cy="4.6" r="1.2" fill="#cfe3f2"/></svg>
<svg style="left:918.40px;top:78.20px" width="3.40" height="6.20" viewBox="0 0 3.4 6.2"><path d="M.2 1.8 L3 4.4 L1.6 5.8 V.4 L3 1.8 L.2 4.4" fill="none" stroke="#cfe3f2" stroke-width=".6"/></svg>
<svg style="left:925.60px;top:78.60px" width="5.40" height="5.40" viewBox="0 0 5.4 5.4"><path d="M.4 1.8 H1.8 L3.4 .4 V5 L1.8 3.6 H.4Z" fill="#cfe3f2"/><path d="M.2 .2 L5 5" stroke="#cfe3f2" stroke-width=".7"/></svg>
<svg style="left:934.60px;top:78.80px" width="7.00" height="5.20" viewBox="0 0 7 5.2"><path d="M.4 1.8 C2 .2 5 .2 6.6 1.8 M1.6 3 C2.6 2 4.4 2 5.4 3" fill="none" stroke="#cfe3f2" stroke-width=".7"/><circle cx="3.5" cy="4.2" r=".7" fill="#cfe3f2"/><path d="M4.6 3.6 L6 5" stroke="#cfe3f2" stroke-width=".5"/></svg>
<svg style="left:944.00px;top:78.40px" width="6.00" height="6.00" viewBox="0 0 6 6"><circle cx="3" cy="3" r="2.5" fill="none" stroke="#cfe3f2" stroke-width=".8"/><path d="M1.3 1.3 L4.7 4.7" stroke="#cfe3f2" stroke-width=".8"/></svg>
<svg style="left:972.00px;top:78.60px" width="3.20" height="5.60" viewBox="0 0 3.2 5.6"><rect x=".2" y=".8" width="2.8" height="4.6" fill="#cfe3f2"/><rect x="1" y="0" width="1.2" height=".9" fill="#cfe3f2"/></svg>
<svg style="left:816.60px;top:476.90px" width="14.80" height="15.00" viewBox="0 0 14.8 15"><rect x=".3" y=".3" width="14" height="5.6" fill="#8fb4ee" stroke="#5f8fd8" stroke-width=".5"/><rect x=".3" y=".3" width="14" height="1.6" fill="#3f73d0"/><rect x="3.4" y="2.8" width="2.4" height="2.4" fill="#2fc02f"/><path d="M6 4.2 H13.4 M7.4 3 L6 4.2 L7.4 5.4 M12 3 L13.4 4.2 L12 5.4" stroke="#111" stroke-width=".8" fill="none"/><path d="M6.6 6.6 V14.2 M5.4 8 L6.6 6.6 L7.8 8 M5.4 12.8 L6.6 14.2 L7.8 12.8" stroke="#111" stroke-width=".8" fill="none"/></svg>
<svg style="left:836.90px;top:477.70px" width="14.20" height="13.40" viewBox="0 0 14.2 13.4"><rect x="4.2" y="3.8" width="5.8" height="5.8" fill="#b4f0b4" stroke="#111" stroke-width=".9"/><rect x="5.8" y="5.4" width="2.6" height="2.6" fill="#18a818"/><path d="M.8 .8 L4.2 3.8 M13.4 .8 L10 3.8 M.8 12.6 L4.2 9.6 M13.4 12.6 L10 9.6" stroke="#111" stroke-width=".9"/><path d="M.4 .4h1.8v.6h-1.2v1.2h-.6z M13.8 .4h-1.8v.6h1.2v1.2h.6z M.4 13h1.8v-.6h-1.2v-1.2h-.6z M13.8 13h-1.8v-.6h1.2v-1.2h.6z" fill="#111"/></svg>
<svg style="left:856.10px;top:480.00px" width="8.50" height="8.70" viewBox="0 0 8.5 8.7"><rect x=".4" y=".4" width="7.7" height="7.8999999999999995" fill="#f3f3f3" stroke="#8e8f8f" stroke-width=".8"/><rect x="1.5" y="1.5" width="5.5" height="5.699999999999999" fill="#e9e9e9" stroke="#d2d2d2" stroke-width=".5"/></svg>
<svg style="left:866.60px;top:477.30px" width="14.20" height="14.00" viewBox="0 0 14.2 14"><rect x=".5" y=".5" width="5.2" height="9.6" rx="1" fill="#cfcfcf" stroke="#444" stroke-width=".8"/><rect x="1.4" y="1.6" width="3.4" height="3.6" fill="#fff" stroke="#888" stroke-width=".4"/><path d="M1.4 6.4h3.4M1.4 7.6h3.4M1.4 8.8h3.4" stroke="#777" stroke-width=".7"/><rect x="7.8" y="3.6" width="5.4" height="9.8" rx="1" fill="#fff" stroke="#555" stroke-width=".8"/><path d="M8.6 4.8h3.8v2.4h-3.8z" fill="#999"/><path d="M6.8 1.6 H10 M8 .4 L6.6 1.6 L8 2.8" stroke="#e01818" stroke-width="1.2" fill="none"/><path d="M3.6 12.2 H7 M5.8 11 L7.2 12.2 L5.8 13.4" stroke="#e01818" stroke-width="1.2" fill="none"/></svg>
<svg style="left:886.70px;top:483.10px" width="4.60" height="2.80" viewBox="0 0 4.6 2.8"><path d="M0 0h4.6l-2.3 2.8z" fill="#222"/></svg>
<svg style="left:933.00px;top:475.70px" width="9.60" height="16.80" viewBox="0 0 9.6 16.8"><rect x=".3" y=".3" width="8.4" height="7.6" fill="#f4f4f4" stroke="#d8d8d8" stroke-width=".6"/><rect x=".3" y="8.4" width="8.4" height="7.6" fill="#f4f4f4" stroke="#d8d8d8" stroke-width=".6"/><path d="M9 .2 V16.4 H.2 M.2 8.1 H9" stroke="#333" stroke-width=".9" fill="none"/><path d="M2.6 5.2 L4.5 2.8 L6.4 5.2Z M2.6 11.2 L4.5 13.6 L6.4 11.2Z" fill="#111"/></svg>
<svg style="left:382.90px;top:124.80px" width="1" height="1"><path d="M-2.2 1.2100000000000002 L0 -1.2100000000000002 L2.2 1.2100000000000002Z" fill="#444"/></svg>
<svg style="left:382.90px;top:299.50px" width="1" height="1"><path d="M-2.2 -1.2100000000000002 L0 1.2100000000000002 L2.2 -1.2100000000000002Z" fill="#444"/></svg>
<svg style="left:238.60px;top:311.00px" width="1" height="1"><path d="M1.2100000000000002 -2.2 L-1.2100000000000002 0 L1.2100000000000002 2.2Z" fill="#444"/></svg>
<svg style="left:371.50px;top:311.00px" width="1" height="1"><path d="M-1.2100000000000002 -2.2 L1.2100000000000002 0 L-1.2100000000000002 2.2Z" fill="#444"/></svg>
<svg style="left:381.20px;top:191.10px" width="4.00" height="4.80" viewBox="0 0 4 4.8"><path d="M0 .6H4M0 2.4H4M0 4.2H4" stroke="#8a8a8a" stroke-width=".7"/></svg>
<svg style="left:285.60px;top:309.00px" width="4.80" height="4.00" viewBox="0 0 4.8 4"><path d="M.6 0V4M2.4 0V4M4.2 0V4" stroke="#8a8a8a" stroke-width=".7"/></svg>
<svg style="left:385.20px;top:349.30px" width="1" height="1"><path d="M-2.2 1.2100000000000002 L0 -1.2100000000000002 L2.2 1.2100000000000002Z" fill="#444"/></svg>
<svg style="left:385.20px;top:438.60px" width="1" height="1"><path d="M-2.2 -1.2100000000000002 L0 1.2100000000000002 L2.2 -1.2100000000000002Z" fill="#444"/></svg>
<svg style="left:238.60px;top:450.00px" width="1" height="1"><path d="M1.2100000000000002 -2.2 L-1.2100000000000002 0 L1.2100000000000002 2.2Z" fill="#444"/></svg>
<svg style="left:373.60px;top:450.00px" width="1" height="1"><path d="M-1.2100000000000002 -2.2 L1.2100000000000002 0 L-1.2100000000000002 2.2Z" fill="#444"/></svg>
<svg style="left:383.20px;top:373.10px" width="4.00" height="4.80" viewBox="0 0 4 4.8"><path d="M0 .6H4M0 2.4H4M0 4.2H4" stroke="#8a8a8a" stroke-width=".7"/></svg>
<svg style="left:271.80px;top:448.00px" width="4.80" height="4.00" viewBox="0 0 4.8 4"><path d="M.6 0V4M2.4 0V4M4.2 0V4" stroke="#8a8a8a" stroke-width=".7"/></svg>
<svg style="left:377.40px;top:87.80px" width="7.60" height="7.20" viewBox="0 0 7.6 7.2"><path d="M0 0 H7.6 V1 L4.7 3.8 V7.2 H2.9 V3.8 L0 1Z" fill="#3b5876"/></svg>
<svg style="left:391.00px;top:83.20px" width="6.20" height="41.40" viewBox="0 0 6.2 41.4"><rect x="0" y="0" width="6.2" height="41.4" fill="#fafafa"/><path d="M4 5.5 V36" stroke="#555" stroke-width=".9" stroke-dasharray="1 1.6"/><path d="M5 1 V5.6 L2 3.3Z M5 35.8 V40.4 L2 38.1Z" fill="#111"/></svg>
<svg style="left:12.80px;top:366.80px" width="40.20" height="4.60" viewBox="0 0 40.2 4.6"><path d="M4.5 2.2 H36" stroke="#555" stroke-width=".9" stroke-dasharray="1 1.6"/><path d="M0 .6 H4.6 L2.3 3.6Z M35.6 .6 H40.2 L37.9 3.6Z" fill="#111"/></svg>
<svg style="left:107.80px;top:376.80px" width="10.00" height="10.00" viewBox="0 0 10 10"><path d="M6.55 2.30 A3.1 3.1 0 1 0 8.10 5.78" fill="none" stroke="#999" stroke-width="1.0"/><path d="M5.62 3.29 h2.94 v-2.94z" fill="#999"/></svg>
<svg style="left:121.40px;top:379.80px" width="4.60" height="2.80" viewBox="0 0 4.6 2.8"><path d="M0 0h4.6l-2.3 2.8z" fill="#888"/></svg>
<svg style="left:131.60px;top:374.00px" width="14.20" height="13.80" viewBox="0 0 14.2 13.8"><rect x=".5" y=".5" width="5.2" height="9.2" rx="1" fill="#dedede" stroke="#888" stroke-width=".8"/><rect x="1.4" y="1.6" width="3.4" height="3.6" fill="#fff"/><path d="M1.4 6.4h3.4M1.4 7.8h3.4" stroke="#999" stroke-width=".7"/><rect x="7.8" y="3.8" width="5.4" height="9.4" rx="1" fill="#fff" stroke="#888" stroke-width=".8"/><path d="M8.6 4.8h3.8v2.2h-3.8z" fill="#aaa"/><path d="M6.8 1.6 H10 M8 .4 L6.6 1.6 L8 2.8" stroke="#f07070" stroke-width=".9" fill="none"/><path d="M3.6 12.2 H7 M5.8 11 L7.2 12.2 L5.8 13.4" stroke="#f07070" stroke-width=".9" fill="none"/></svg>
<svg style="left:148.40px;top:379.80px" width="4.60" height="2.80" viewBox="0 0 4.6 2.8"><path d="M0 0h4.6l-2.3 2.8z" fill="#888"/></svg>
<svg style="left:161.10px;top:376.20px" width="8.80" height="7.80" viewBox="0 0 8.8 7.8"><rect x="0" y="0" width="8.8" height="7.8" fill="#6f97d6"/><path d="M4.4 .6V7.2M1 3.9H7.8" stroke="#1c2f5a" stroke-width="1" stroke-dasharray="1.2 .6"/></svg>
<svg style="left:179.70px;top:375.10px" width="11.60" height="10.50" viewBox="0 0 11.6 10.5"><rect x="2.6" y="2" width="7" height="6.8" fill="#8fb0e2" stroke="#6f94d0" stroke-width=".5"/><path d="M.5 3.4 V.5 H3.6 M11 7.2 V10 H8" fill="none" stroke="#222" stroke-width=".9"/><path d="M5 4h2.4" stroke="#dfe9f8" stroke-width=".6"/></svg>
<svg style="left:200.10px;top:375.60px" width="10.30" height="9.40" viewBox="0 0 10.3 9.4"><rect x=".4" y=".4" width="9.5" height="8.6" fill="#e2e9f4" stroke="#c2cfe4" stroke-width=".7"/><text x="5.2" y="6.9" font-family="Liberation Sans" font-weight="bold" font-size="5.6" text-anchor="middle" fill="#5a7296">T?</text></svg>
<svg style="left:217.60px;top:376.80px" width="5.20" height="9.60" viewBox="0 0 5.2 9.6"><path d="M.6 .6 L4.4 4.8 L.6 9" fill="none" stroke="#8a8a8a" stroke-width="1.2"/></svg>
<svg style="left:695.90px;top:466.30px" width="4.20" height="2.60" viewBox="0 0 4.2 2.6"><path d="M0 0h4.2l-2.1 2.6z" fill="#333"/></svg>
<svg style="left:706.40px;top:464.60px" width="9.60" height="5.60" viewBox="0 0 9.6 5.6"><path d="M0 2.8 H4" stroke="#c6d2e4" stroke-width="1.4"/><circle cx="1.4" cy="2.8" r="1" fill="none" stroke="#b8c6dc" stroke-width=".5"/><rect x="4" y=".5" width="5" height="4.4" rx=".6" fill="#fff" stroke="#b9c6dc" stroke-width=".8"/></svg>
<svg style="left:720.70px;top:465.00px" width="9.20" height="5.00" viewBox="0 0 9.2 5"><path d="M0 1h1.3M2 1h1.3 M0 3.8h1.3M2 3.8h1.3" stroke="#27496f" stroke-width="1.2"/><path d="M4.6 1H9M4.6 3.8H9" stroke="#355a86" stroke-width="1.3"/></svg>
<svg style="left:734.00px;top:461.10px" width="12.00" height="12.00" viewBox="0 0 12 12"><rect width="12" height="12" fill="#0e0e0e"/><path d="M2.4 3.1 V10.3 H9.8 V3.1" fill="none" stroke="#e4e4e4" stroke-width=".75"/><rect x="5" y="0" width="2" height="7.5" fill="#bdbdbd"/></svg>
<svg style="left:704.00px;top:484.20px" width="9.20" height="8.80" viewBox="0 0 9.2 8.8"><ellipse cx="4.6" cy="4.4" rx="4.2" ry="4" fill="url(#gS)" stroke="#bdbdbd" stroke-width=".6"/><path d="M.8 4.6 H8.4" stroke="#aaa" stroke-width=".8"/><ellipse cx="4.6" cy="2.6" rx="2.8" ry="1.4" fill="#fff"/></svg>
<svg style="left:738.60px;top:484.80px" width="8.80" height="8.20" viewBox="0 0 8.8 8.2"><rect x=".4" y=".4" width="8" height="7.4" fill="#cdeccd" stroke="#b4c4b4" stroke-width=".7"/><path d="M8.4 .8V7.8H1" stroke="#9aa49a" stroke-width=".6" fill="none"/><path d="M2.4 2 V4" stroke="#6a8a9a" stroke-width=".5"/></svg>
<svg style="left:523.60px;top:184.60px" width="6.40" height="6.40" viewBox="0 0 6.4 6.4"><circle cx="3.2" cy="3.2" r="2.3" fill="#d8d8d8" stroke="#8c8c8c" stroke-width="1.3" stroke-dasharray="1 .8"/><circle cx="3.2" cy="3.2" r="1" fill="#fff" stroke="#999" stroke-width=".4"/></svg>
<svg style="left:134.00px;top:64.70px" width="9.20" height="9.20" viewBox="0 0 9.2 9.2"><defs><linearGradient id="gX" x1="0" y1="0" x2="0" y2="1"><stop offset="0" stop-color="#f2a8a8"/><stop offset=".5" stop-color="#d84a4e"/><stop offset="1" stop-color="#c93a3e"/></linearGradient></defs><rect x=".4" y=".4" width="8.4" height="8.4" rx="1.4" fill="url(#gX)" stroke="#c05a5e" stroke-width=".7"/><path d="M2.8 2.8 L6.4 6.4 M6.4 2.8 L2.8 6.4" stroke="#fff" stroke-width="1.5"/></svg>
<svg style="left:11.60px;top:65.20px" width="6.40" height="6.40" viewBox="0 0 6.4 6.4"><path d="M3.2 .4V6M.4 3.2H6" stroke="#a4a4a4" stroke-width="1.7"/></svg>

</body></html>
